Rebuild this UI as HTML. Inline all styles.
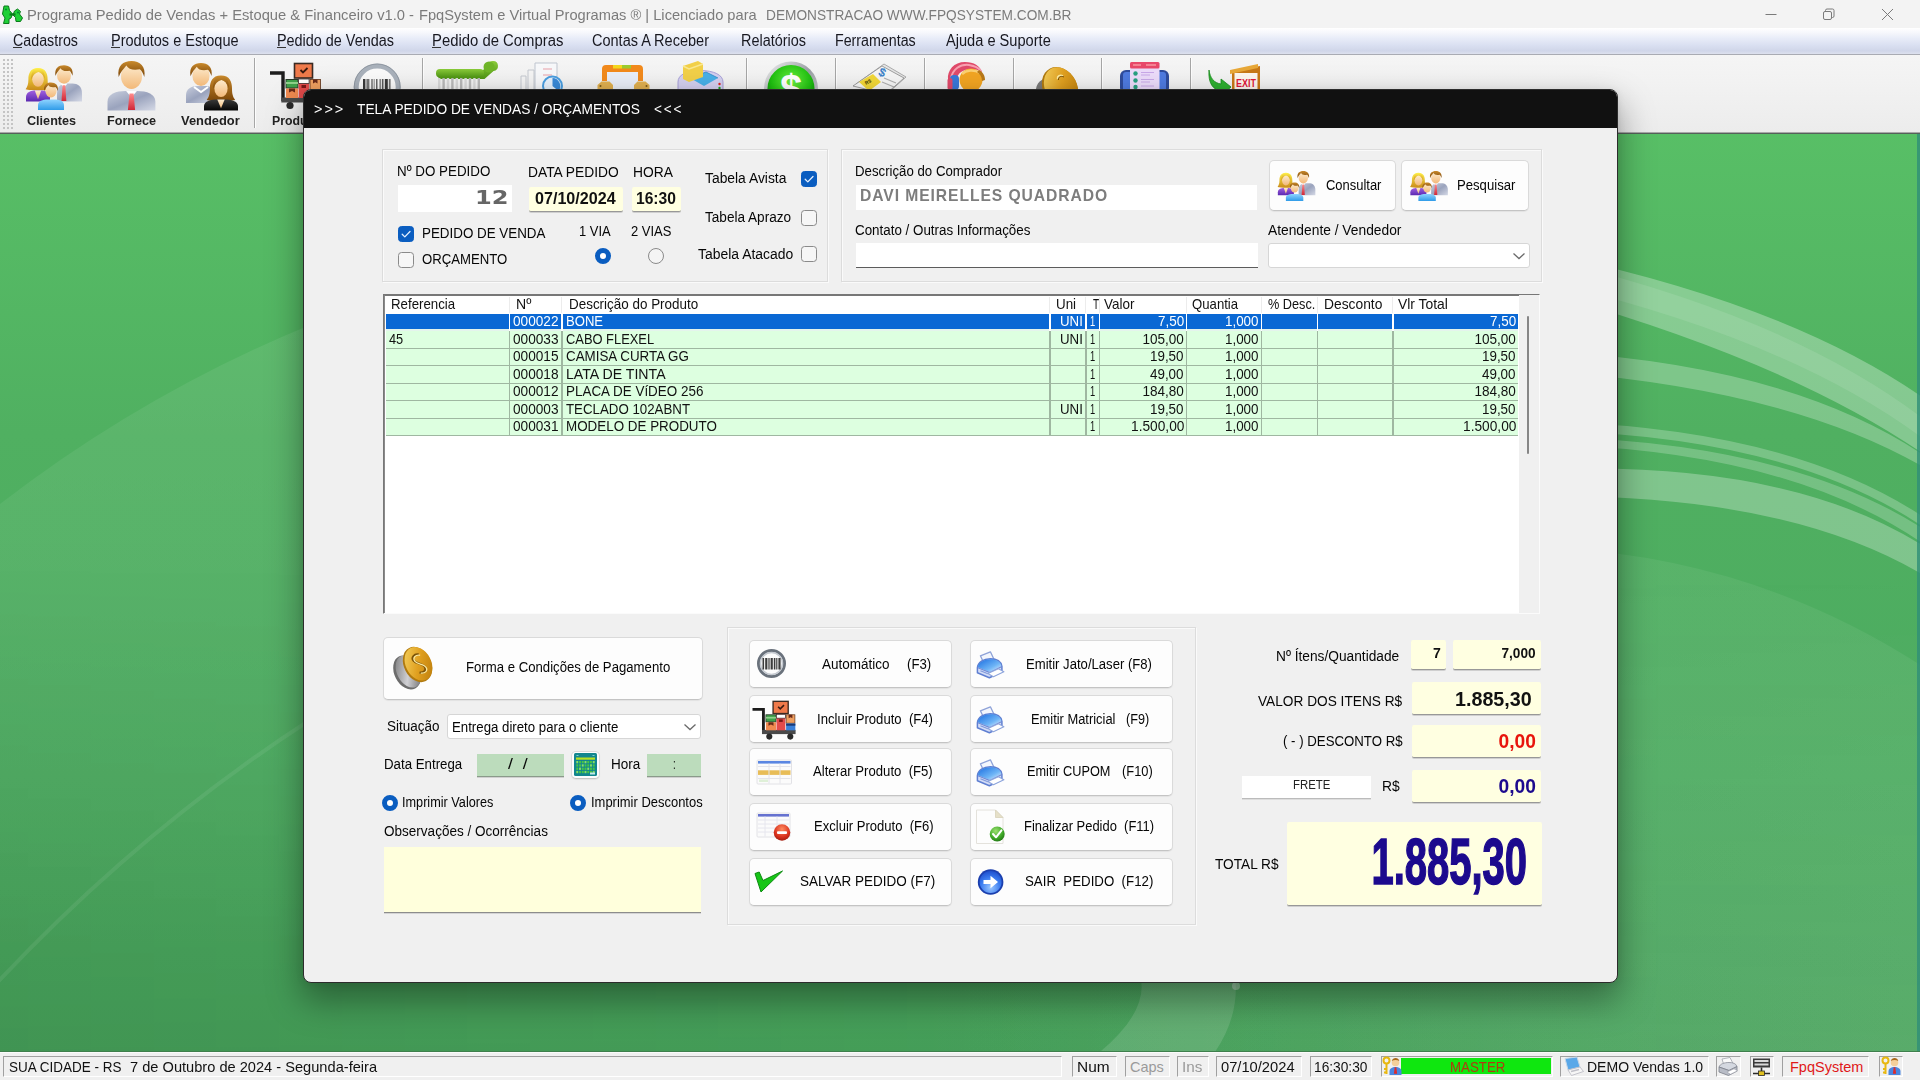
<!DOCTYPE html>
<html lang="pt-BR"><head><meta charset="utf-8"><title>Programa Pedido de Vendas</title>
<style>
html,body{margin:0;padding:0;}
body{width:1920px;height:1080px;overflow:hidden;background:#4fae60;}
#app{position:relative;width:1920px;height:1080px;overflow:hidden;font-family:"Liberation Sans",sans-serif;}
#app div,#app span.t,#app svg{position:absolute;box-sizing:border-box;}
#app span.t{white-space:nowrap;display:block;}
.btn{background:#fdfdfd;border:1px solid #dadada;border-bottom-color:#c4c4c4;border-radius:5px;box-shadow:0 1px 1px rgba(0,0,0,.06);}
.grp{border:1px solid #dcdcdc;box-shadow:inset 1px 1px 0 #fafafa, 1px 1px 0 #fafafa;}
.ylw{background:#ffffe1;border-bottom:1px solid #989898;box-shadow:0 1px 0 #cfcfcf;border-radius:2px;}
.cb{border:1px solid #8a8a8a;border-radius:3.5px;background:#f6f6f6;}
.cb.on{border-color:#0a5dc0;background:#0a5dc0;}
.rd{border:1px solid #8a8a8a;border-radius:50%;background:#f4f4f4;}
.rd.on{border:5px solid #0a5dc0;background:#fff;}
.sp{border:1px solid;border-color:#a0a0a0 #fff #fff #a0a0a0;}

</style></head>
<body>
<div id="app">
<svg width="1920" height="1080" viewBox="0 0 1920 1080" style="left:0;top:0">
<defs>
<linearGradient id="bg" x1="0" y1="0" x2="0" y2="1">
<stop offset="0.12" stop-color="#58bf66"/><stop offset="0.40" stop-color="#50b061"/><stop offset="0.72" stop-color="#4cab60"/><stop offset="0.98" stop-color="#47a35b"/>
</linearGradient>
<linearGradient id="bgx" x1="0" y1="0" x2="1" y2="0"><stop offset="0" stop-color="#000" stop-opacity=".09"/><stop offset=".5" stop-color="#000" stop-opacity=".03"/><stop offset="1" stop-color="#fff" stop-opacity=".04"/></linearGradient>
<linearGradient id="bgm" x1="0" y1="0" x2="0" y2="1"><stop offset="0" stop-color="#fff" stop-opacity="0"/><stop offset="1" stop-color="#fff" stop-opacity="1"/></linearGradient>
<mask id="mk"><rect x="0" y="560" width="1920" height="500" fill="url(#bgm)"/></mask>
</defs>
<rect width="1920" height="1080" fill="url(#bg)"/>
<rect x="0" y="560" width="1920" height="500" fill="url(#bgx)" mask="url(#mk)"/>
<path d="M1560 256Q1793.5 306.5 1925 399L1925 455Q1793.5 364.0 1560 297z" fill="rgba(255,255,255,0.3)"/><path d="M1560 262Q1793.5 319.0 1925 420L1925 440Q1793.5 341.5 1560 285z" fill="rgba(255,255,255,0.1)"/><path d="M1560 352Q1793.5 367.0 1925 456L1925 468Q1793.5 391.0 1560 372z" fill="rgba(255,255,255,0.26)"/><path d="M1560 422Q1793.5 430.0 1925 518L1925 528Q1793.5 438.5 1560 431z" fill="rgba(255,255,255,0.24)"/><path d="M1560 437Q1793.5 444.5 1925 530L1925 545Q1793.5 453.0 1560 445z" fill="rgba(255,255,255,0.22)"/><path d="M1560 469Q1793.5 463.0 1925 547L1925 576Q1793.5 497.0 1560 496z" fill="rgba(255,255,255,0.28)"/><linearGradient id="gFadeR" gradientUnits="userSpaceOnUse" x1="900" y1="0" x2="1650" y2="0"><stop offset="0" stop-color="#fff" stop-opacity="0"/><stop offset="1" stop-color="#fff" stop-opacity=".06"/></linearGradient><path d="M900 548H1560Q1760 560 1925 668V1060H900z" fill="url(#gFadeR)"/><linearGradient id="gFadeL" gradientUnits="userSpaceOnUse" x1="0" y1="330" x2="0" y2="960"><stop offset="0" stop-color="#fff" stop-opacity=".075"/><stop offset=".45" stop-color="#fff" stop-opacity=".05"/><stop offset="1" stop-color="#fff" stop-opacity="0"/></linearGradient><path d="M-5 508Q140 395 310 325V1000H-5z" fill="url(#gFadeL)"/><path d="M-5 985Q140 830 310 720" fill="none" stroke="rgba(255,255,255,.07)" stroke-width="4"/><path d="M1100 1052Q1150 1010 1140 975L1235 975Q1240 1015 1215 1052z" fill="rgba(255,255,255,.13)"/><circle cx="1236" cy="986" r="4" fill="rgba(255,255,255,.35)"/><rect x="1917" y="133" width="3" height="920" fill="#2f8f78" opacity=".8"/>
</svg>
<div style="left:0px;top:0px;width:1920px;height:28px;background:#f3f3f3;"></div>
<span id="t1" class="t" style="top:4.8px;font:400 15px/20px 'Liberation Sans', sans-serif;color:#7b7b7b;left:27px;transform-origin:0 50%;transform:scaleX(0.9822);">Programa Pedido de Vendas + Estoque &amp; Financeiro v1.0 -</span>
<span id="t2" class="t" style="top:4.8px;font:400 15px/20px 'Liberation Sans', sans-serif;color:#7b7b7b;left:419px;transform-origin:0 50%;transform:scaleX(0.9769);">FpqSystem e Virtual Programas ® | Licenciado para</span>
<span id="t3" class="t" style="top:4.8px;font:400 15px/20px 'Liberation Sans', sans-serif;color:#7b7b7b;left:766px;transform-origin:0 50%;transform:scaleX(0.9119);">DEMONSTRACAO WWW.FPQSYSTEM.COM.BR</span>
<svg width="160" height="30" viewBox="0 0 160 30" style="left:1760px;top:0" fill="none" stroke="#7a7a7a" stroke-width="1">
<path d="M5.5 14.5h11"/><rect x="63.500" y="11.500" width="8" height="8" rx="1.500"/><path d="M65.500 11.500v-1a1.500 1.500 0 0 1 1.500-1.500h5.500a1.500 1.500 0 0 1 1.500 1.500v5.500a1.500 1.500 0 0 1-1.500 1.500h-1"/><path d="M122 9l11 11M133 9l-11 11"/></svg>
<svg width="24" height="24" viewBox="0 0 24 24" style="left:0;top:3px"><path d="M4 3h4.500l1 4.500 3 3.500-1.500 4-2 1v4.500H3.500l1.500-5.500-2.500-4z" fill="#1fd036" stroke="#0c7a1c" stroke-width="1"/><path d="M14.500 8l3-2 3 2.500-1 2.500 3 4-2 3.500h-4.500l-.5-4-2.500-2.500z" fill="#1fd036" stroke="#0c7a1c" stroke-width="1"/><path d="M9.500 11.500h6" stroke="#0c7a1c" stroke-width="2.200"/><circle cx="6" cy="6.500" r="1" fill="#083"/><circle cx="18" cy="9.500" r="1" fill="#083"/></svg>
<div style="left:0px;top:28px;width:1920px;height:26px;background:linear-gradient(#ffffff 0%,#f6f7fc 18%,#e8ecf8 40%,#d9dff1 68%,#d0d6e9 88%,#dde1ee 100%);"></div>
<div style="left:0px;top:54px;width:1920px;height:1px;background:#a9abb3;"></div>
<span id="t4" class="t" style="top:29.5px;font:400 16px/21px 'Liberation Sans', sans-serif;color:#181820;left:13px;transform-origin:0 50%;transform:scaleX(0.8904);">Cadastros</span>
<span id="t5" class="t" style="top:29.5px;font:400 16px/21px 'Liberation Sans', sans-serif;color:#181820;left:111px;transform-origin:0 50%;transform:scaleX(0.9078);">Produtos e Estoque</span>
<span id="t6" class="t" style="top:29.5px;font:400 16px/21px 'Liberation Sans', sans-serif;color:#181820;left:277px;transform-origin:0 50%;transform:scaleX(0.9000);">Pedido de Vendas</span>
<span id="t7" class="t" style="top:29.5px;font:400 16px/21px 'Liberation Sans', sans-serif;color:#181820;left:432px;transform-origin:0 50%;transform:scaleX(0.9291);">Pedido de Compras</span>
<span id="t8" class="t" style="top:29.5px;font:400 16px/21px 'Liberation Sans', sans-serif;color:#181820;left:592px;transform-origin:0 50%;transform:scaleX(0.9070);">Contas A Receber</span>
<span id="t9" class="t" style="top:29.5px;font:400 16px/21px 'Liberation Sans', sans-serif;color:#181820;left:741px;transform-origin:0 50%;transform:scaleX(0.9028);">Relatórios</span>
<span id="t10" class="t" style="top:29.5px;font:400 16px/21px 'Liberation Sans', sans-serif;color:#181820;left:835px;transform-origin:0 50%;transform:scaleX(0.8901);">Ferramentas</span>
<span id="t11" class="t" style="top:29.5px;font:400 16px/21px 'Liberation Sans', sans-serif;color:#181820;left:946px;transform-origin:0 50%;transform:scaleX(0.9130);">Ajuda e Suporte</span>
<div style="left:13px;top:47px;width:9px;height:1px;background:#333;"></div>
<div style="left:111px;top:47px;width:9px;height:1px;background:#333;"></div>
<div style="left:277px;top:47px;width:9px;height:1px;background:#333;"></div>
<div style="left:432px;top:47px;width:9px;height:1px;background:#333;"></div>
<div style="left:0px;top:55px;width:1920px;height:78px;background:linear-gradient(#f5f5f5,#ececec);"></div>
<div style="left:0px;top:132px;width:1920px;height:1px;background:#a8a8a8;"></div>
<div style="left:0px;top:133px;width:1920px;height:1px;background:#55615a;"></div>
<div style="left:254px;top:58px;width:2px;height:70px;border-left:1px solid #a6a6a6;border-right:1px solid #fdfdfd;"></div>
<div style="left:422px;top:58px;width:2px;height:70px;border-left:1px solid #a6a6a6;border-right:1px solid #fdfdfd;"></div>
<div style="left:746px;top:58px;width:2px;height:70px;border-left:1px solid #a6a6a6;border-right:1px solid #fdfdfd;"></div>
<div style="left:835px;top:58px;width:2px;height:70px;border-left:1px solid #a6a6a6;border-right:1px solid #fdfdfd;"></div>
<div style="left:924px;top:58px;width:2px;height:70px;border-left:1px solid #a6a6a6;border-right:1px solid #fdfdfd;"></div>
<div style="left:1013px;top:58px;width:2px;height:70px;border-left:1px solid #a6a6a6;border-right:1px solid #fdfdfd;"></div>
<div style="left:1101px;top:58px;width:2px;height:70px;border-left:1px solid #a6a6a6;border-right:1px solid #fdfdfd;"></div>
<div style="left:1190px;top:58px;width:2px;height:70px;border-left:1px solid #a6a6a6;border-right:1px solid #fdfdfd;"></div>
<svg width="12" height="74" style="left:1px;top:57px"><rect x="2" y="2" width="2" height="2" fill="#c4c4c4"/><rect x="6" y="2" width="2" height="2" fill="#c4c4c4"/><rect x="10" y="2" width="2" height="2" fill="#c4c4c4"/><rect x="2" y="6" width="2" height="2" fill="#c4c4c4"/><rect x="6" y="6" width="2" height="2" fill="#c4c4c4"/><rect x="10" y="6" width="2" height="2" fill="#c4c4c4"/><rect x="2" y="10" width="2" height="2" fill="#c4c4c4"/><rect x="6" y="10" width="2" height="2" fill="#c4c4c4"/><rect x="10" y="10" width="2" height="2" fill="#c4c4c4"/><rect x="2" y="14" width="2" height="2" fill="#c4c4c4"/><rect x="6" y="14" width="2" height="2" fill="#c4c4c4"/><rect x="10" y="14" width="2" height="2" fill="#c4c4c4"/><rect x="2" y="18" width="2" height="2" fill="#c4c4c4"/><rect x="6" y="18" width="2" height="2" fill="#c4c4c4"/><rect x="10" y="18" width="2" height="2" fill="#c4c4c4"/><rect x="2" y="22" width="2" height="2" fill="#c4c4c4"/><rect x="6" y="22" width="2" height="2" fill="#c4c4c4"/><rect x="10" y="22" width="2" height="2" fill="#c4c4c4"/><rect x="2" y="26" width="2" height="2" fill="#c4c4c4"/><rect x="6" y="26" width="2" height="2" fill="#c4c4c4"/><rect x="10" y="26" width="2" height="2" fill="#c4c4c4"/><rect x="2" y="30" width="2" height="2" fill="#c4c4c4"/><rect x="6" y="30" width="2" height="2" fill="#c4c4c4"/><rect x="10" y="30" width="2" height="2" fill="#c4c4c4"/><rect x="2" y="34" width="2" height="2" fill="#c4c4c4"/><rect x="6" y="34" width="2" height="2" fill="#c4c4c4"/><rect x="10" y="34" width="2" height="2" fill="#c4c4c4"/><rect x="2" y="38" width="2" height="2" fill="#c4c4c4"/><rect x="6" y="38" width="2" height="2" fill="#c4c4c4"/><rect x="10" y="38" width="2" height="2" fill="#c4c4c4"/><rect x="2" y="42" width="2" height="2" fill="#c4c4c4"/><rect x="6" y="42" width="2" height="2" fill="#c4c4c4"/><rect x="10" y="42" width="2" height="2" fill="#c4c4c4"/><rect x="2" y="46" width="2" height="2" fill="#c4c4c4"/><rect x="6" y="46" width="2" height="2" fill="#c4c4c4"/><rect x="10" y="46" width="2" height="2" fill="#c4c4c4"/><rect x="2" y="50" width="2" height="2" fill="#c4c4c4"/><rect x="6" y="50" width="2" height="2" fill="#c4c4c4"/><rect x="10" y="50" width="2" height="2" fill="#c4c4c4"/><rect x="2" y="54" width="2" height="2" fill="#c4c4c4"/><rect x="6" y="54" width="2" height="2" fill="#c4c4c4"/><rect x="10" y="54" width="2" height="2" fill="#c4c4c4"/><rect x="2" y="58" width="2" height="2" fill="#c4c4c4"/><rect x="6" y="58" width="2" height="2" fill="#c4c4c4"/><rect x="10" y="58" width="2" height="2" fill="#c4c4c4"/><rect x="2" y="62" width="2" height="2" fill="#c4c4c4"/><rect x="6" y="62" width="2" height="2" fill="#c4c4c4"/><rect x="10" y="62" width="2" height="2" fill="#c4c4c4"/><rect x="2" y="66" width="2" height="2" fill="#c4c4c4"/><rect x="6" y="66" width="2" height="2" fill="#c4c4c4"/><rect x="10" y="66" width="2" height="2" fill="#c4c4c4"/><rect x="2" y="70" width="2" height="2" fill="#c4c4c4"/><rect x="6" y="70" width="2" height="2" fill="#c4c4c4"/><rect x="10" y="70" width="2" height="2" fill="#c4c4c4"/></svg>
<span id="t12" class="t" style="top:111.5px;font:700 13px/17px 'Liberation Sans', sans-serif;color:#222;left:27px;transform-origin:0 50%;transform:scaleX(0.9706);">Clientes</span>
<span id="t13" class="t" style="top:111.5px;font:700 13px/17px 'Liberation Sans', sans-serif;color:#222;left:106.5px;transform-origin:0 50%;transform:scaleX(0.9706);">Fornece</span>
<span id="t14" class="t" style="top:111.5px;font:700 13px/17px 'Liberation Sans', sans-serif;color:#222;left:180.5px;transform-origin:0 50%;transform:scaleX(0.9915);">Vendedor</span>
<span id="t15" class="t" style="top:111.5px;font:700 13px/17px 'Liberation Sans', sans-serif;color:#222;left:271.5px;transform-origin:0 50%;transform:scaleX(0.9474);">Produ</span>
<svg width="1920" height="80" viewBox="0 54 1920 80" style="left:0;top:54px"><defs>
<linearGradient id="gSkin" x1="0" y1="0" x2="0" y2="1"><stop offset="0" stop-color="#fdeccf"/><stop offset="1" stop-color="#f2b878"/></linearGradient>
<linearGradient id="gHair" x1="0" y1="0" x2="0" y2="1"><stop offset="0" stop-color="#c98a2c"/><stop offset="1" stop-color="#7a4508"/></linearGradient>
<linearGradient id="gBlond" x1="0" y1="0" x2="0" y2="1"><stop offset="0" stop-color="#fff04a"/><stop offset="1" stop-color="#c98a1a"/></linearGradient>
<linearGradient id="gSuit" x1="0" y1="0" x2="1" y2="1"><stop offset="0" stop-color="#c9cfde"/><stop offset=".5" stop-color="#9aa3bd"/><stop offset="1" stop-color="#d5d9e6"/></linearGradient>
<linearGradient id="gPurple" x1="0" y1="0" x2="0" y2="1"><stop offset="0" stop-color="#a060e0"/><stop offset="1" stop-color="#5a28b0"/></linearGradient>
<linearGradient id="gBlue" x1="0" y1="0" x2="0" y2="1"><stop offset="0" stop-color="#8fd4ff"/><stop offset="1" stop-color="#2f9be8"/></linearGradient>
<linearGradient id="gBlack" x1="0" y1="0" x2="0" y2="1"><stop offset="0" stop-color="#3a3a3a"/><stop offset="1" stop-color="#050505"/></linearGradient>
<linearGradient id="gTie" x1="0" y1="0" x2="0" y2="1"><stop offset="0" stop-color="#ff8a8a"/><stop offset="1" stop-color="#d02838"/></linearGradient>
<radialGradient id="gGreenBall" cx=".5" cy=".35" r=".7"><stop offset="0" stop-color="#6cf040"/><stop offset=".6" stop-color="#1fc010"/><stop offset="1" stop-color="#0a7a08"/></radialGradient>
<linearGradient id="gSilver" x1="0" y1="0" x2="1" y2="1"><stop offset="0" stop-color="#f4f4f4"/><stop offset=".5" stop-color="#9a9ea4"/><stop offset="1" stop-color="#e4e4e4"/></linearGradient>
<linearGradient id="gGold" x1="0" y1="0" x2="1" y2="1"><stop offset="0" stop-color="#f7d766"/><stop offset=".5" stop-color="#e0a020"/><stop offset="1" stop-color="#b87808"/></linearGradient>
<linearGradient id="gGray" x1="0" y1="0" x2="1" y2="1"><stop offset="0" stop-color="#6e6e6e"/><stop offset=".5" stop-color="#d0d0d4"/><stop offset="1" stop-color="#5a5a5a"/></linearGradient>
<linearGradient id="gBasket" x1="0" y1="0" x2="0" y2="1"><stop offset="0" stop-color="#8acb3a"/><stop offset="1" stop-color="#4f9414"/></linearGradient>
<linearGradient id="gPrnTop" x1="0" y1="0" x2="1" y2="1"><stop offset="0" stop-color="#1c6ee0"/><stop offset=".6" stop-color="#6db4f6"/><stop offset="1" stop-color="#e8f2ff"/></linearGradient>
<radialGradient id="gBlueBall" cx=".5" cy=".75" r=".8"><stop offset="0" stop-color="#9cc8ff"/><stop offset=".55" stop-color="#3b7cf0"/><stop offset="1" stop-color="#1a49c8"/></radialGradient>
<radialGradient id="gRedBall" cx=".5" cy=".3" r=".8"><stop offset="0" stop-color="#ff8a60"/><stop offset=".6" stop-color="#d8301c"/><stop offset="1" stop-color="#8a1408"/></radialGradient>
<radialGradient id="gGrnChk" cx=".4" cy=".3" r=".8"><stop offset="0" stop-color="#9be070"/><stop offset=".6" stop-color="#3ea828"/><stop offset="1" stop-color="#1c6a10"/></radialGradient>
</defs><g transform="translate(22.5 61.5) scale(1.0)"><path d="M34.5 40.0v-8.1c0 -7.2 4.5 -9.9 9.5 -9.9h6.0c5.0 0 9.5 2.7 9.5 9.9v8.1z" fill="url(#gSuit)"/><path d="M37.9 22.0h7.1l-3.6 4.2z" fill="#fff"/><path d="M40.1 23.7h2.7l1.0 15.9h-4.8z" fill="url(#gTie)"/><ellipse cx="41.5" cy="14.0" rx="7.0" ry="8.3" fill="url(#gSkin)"/><path d="M33.0 14.3c-1.3 -7.7 3.0 -10.6 8.5 -10.6s9.8 3.4 8.5 10.6c-0.9 -2.5 -1.7 -4.2 -3.0 -5.1c-4.2 0.9 -7.7 0 -8.9 -2.5c-2.1 2.5 -3.8 4.2 -5.1 7.7z" fill="url(#gHair)"/><path d="M15.5 6.5c7.6 0 9.6 5.6 9.6 11.2c0 4.8 0.8 7.2 2.8 10.0c-4.8 1.6 -20.0 1.6 -24.8 0c2.0 -2.8 2.8 -5.2 2.8 -10.0c0 -5.6 2.0 -11.2 9.6 -11.2z" fill="url(#gBlond)"/><path d="M3.5 40.0v-4.4c0 -5.0 4.8 -6.6 9.6 -6.6h4.8c4.8 0 9.6 1.6 9.6 6.6v4.4z" fill="url(#gPurple)"/><path d="M12.3 29.0h6.4l-3.2 8.8z" fill="url(#gSkin)"/><ellipse cx="15.5" cy="17.7" rx="5.8" ry="7.6" fill="url(#gSkin)"/><path d="M8.7 18.1c0 -8.8 2.4 -11.2 7.2 -11.2c4.0 0 6.4 3.2 6.4 10.4c-1.6 -4.0 -4.0 -6.4 -6.4 -6.8c-3.2 0.8 -5.6 3.2 -7.2 7.6z" fill="url(#gBlond)"/><path d="M15.5 48.5v-4.7c0 -4.2 4.7 -5.8 9.9 -5.8h6.2c5.2 0 9.9 1.6 9.9 5.8v4.7z" fill="url(#gBlue)"/><ellipse cx="28.5" cy="29.3" rx="5.6" ry="6.7" fill="url(#gSkin)"/><path d="M21.7 29.5c-1.0 -6.1 2.4 -8.5 6.8 -8.5s7.8 2.7 6.8 8.5c-0.7 -2.0 -1.4 -3.4 -2.4 -4.1c-3.4 0.7 -6.1 0 -7.1 -2.0c-1.7 2.0 -3.1 3.4 -4.1 6.1z" fill="url(#gHair)"/></g><path d="M107.5 110.5v-8.8c0 -7.8 8.6 -10.7 18.2 -10.7h11.5c9.6 0 18.2 2.9 18.2 10.7v8.8z" fill="url(#gSuit)"/><path d="M126.1 91.0h10.8l-5.4 6.4z" fill="#fff"/><path d="M129.5 93.6h4.1l1.5 16.3h-7.2z" fill="url(#gTie)"/><ellipse cx="131.5" cy="76.5" rx="10.5" ry="12.5" fill="url(#gSkin)"/><path d="M118.7 76.9c-1.9 -11.5 4.5 -16.0 12.8 -16.0s14.7 5.1 12.8 16.0c-1.3 -3.8 -2.6 -6.4 -4.5 -7.7c-6.4 1.3 -11.5 0 -13.4 -3.8c-3.2 3.8 -5.8 6.4 -7.7 11.5z" fill="url(#gHair)"/><path d="M186.0 103.0v-7.7c0 -6.8 5.4 -9.4 11.4 -9.4h7.2c6.0 0 11.4 2.5 11.4 9.4v7.7z" fill="url(#gSuit)"/><ellipse cx="201.0" cy="75.8" rx="8.6" ry="10.3" fill="url(#gSkin)"/><path d="M190.5 76.1c-1.6 -9.5 3.7 -13.1 10.5 -13.1s12.1 4.2 10.5 13.1c-1.1 -3.1 -2.1 -5.2 -3.7 -6.3c-5.2 1.1 -9.5 0 -11.0 -3.1c-2.6 3.1 -4.7 5.2 -6.3 9.5z" fill="url(#gHair)"/><path d="M194 87l7 5 7-5" fill="none" stroke="#fff" stroke-width="2"/><path d="M221.0 75.5c8.7 0 11.0 6.4 11.0 12.9c0 5.5 0.9 8.3 3.2 11.5c-5.5 1.8 -23.0 1.8 -28.5 0c2.3 -3.2 3.2 -6.0 3.2 -11.5c0 -6.4 2.3 -12.9 11.0 -12.9z" fill="url(#gHair)"/><path d="M204.0 110.5v-4.4c0 -5.0 6.8 -6.6 13.6 -6.6h6.8c6.8 0 13.6 1.6 13.6 6.6v4.4z" fill="url(#gBlack)"/><path d="M217.3 99.5h7.4l-3.7 8.8z" fill="url(#gSkin)"/><ellipse cx="221.0" cy="88.4" rx="6.6" ry="8.7" fill="url(#gSkin)"/><path d="M213.2 88.8c0 -10.1 2.8 -12.9 8.3 -12.9c4.6 0 7.4 3.7 7.4 12.0c-1.8 -4.6 -4.6 -7.4 -7.4 -7.8c-3.7 0.9 -6.4 3.7 -8.3 8.7z" fill="url(#gHair)"/><g transform="translate(270 62.5) scale(1.0)"><path d="M0 10.500h13v28" fill="none" stroke="#1d1d1d" stroke-width="3.400" stroke-linejoin="miter"/><rect x="11.300" y="35" width="40" height="5" fill="#4a4a4a"/><circle cx="20" cy="43" r="3.600" fill="#2a2a2a"/><circle cx="45" cy="43" r="3.600" fill="#2a2a2a"/><rect x="24.500" y="1" width="18" height="14.500" fill="#f07a4a" stroke="#3a2a22" stroke-width="1.600"/><path d="M30.500 7.500l2.500 2.500 4.500-4.500" fill="none" stroke="#3a1a10" stroke-width="1.800"/><rect x="16" y="17" width="12" height="8.500" fill="#3fa04a" stroke="#2a3a2a" stroke-width="1"/><rect x="16" y="19.500" width="12" height="2" fill="#8fd08a"/><rect x="16" y="26" width="12" height="9.500" fill="#f08a50"/><path d="M19 26h6v4l-3-1.500-3 1.500z" fill="#6a2a18"/><rect x="28.600" y="16.500" width="10.500" height="19" fill="#e34b4b"/><rect x="28.600" y="16.500" width="10.500" height="4.500" fill="#fff" stroke="#3a2a2a" stroke-width=".8"/><rect x="31.500" y="22.500" width="4.500" height="3" fill="#7a1818"/><rect x="40" y="17" width="10.500" height="10" fill="#f0a060" stroke="#5a3018" stroke-width=".8"/><path d="M43 17h4.500v4l-2.200-1.200-2.300 1.200z" fill="#6a2a18"/><rect x="40" y="27.500" width="11" height="8" fill="#3a80d8"/><rect x="40" y="27.500" width="11" height="2.500" fill="#1a3a78"/></g><circle cx="377.2" cy="87" r="21.0" fill="#fafafa" stroke="#a9b1bb" stroke-width="5"/><circle cx="377.2" cy="87" r="23.0" fill="none" stroke="#7d858f" stroke-width="1" opacity=".6"/><rect x="363.0" y="79" width="2.4" height="14" fill="#3a3a3a"/><rect x="366.4" y="79" width="3.0" height="14" fill="#777"/><rect x="371.4" y="79" width="1.2" height="14" fill="#555"/><rect x="373.6" y="79" width="1.2" height="14" fill="#999"/><rect x="376.2" y="79" width="1.2" height="14" fill="#444"/><rect x="379.4" y="79" width="1.8" height="14" fill="#888"/><rect x="382.2" y="79" width="1.2" height="14" fill="#333"/><rect x="384.8" y="79" width="3.0" height="14" fill="#3a3a3a"/><rect x="388.8" y="79" width="1.8" height="14" fill="#777"/><path d="M438 77h44v-6l6-5.500a5 5 0 1 1 5.500 5.500l-9 8H440z" fill="url(#gBasket)"/><rect x="436" y="69" width="48" height="8.500" rx="4" fill="url(#gBasket)"/><circle cx="489" cy="67" r="5.500" fill="#6fb528"/><rect x="438.0" y="78" width="2.400" height="12" fill="#d9d9d9"/><rect x="442.4" y="78" width="2.400" height="12" fill="#b9b9b9"/><rect x="446.8" y="78" width="2.400" height="12" fill="#d9d9d9"/><rect x="451.2" y="78" width="2.400" height="12" fill="#b9b9b9"/><rect x="455.6" y="78" width="2.400" height="12" fill="#d9d9d9"/><rect x="460.0" y="78" width="2.400" height="12" fill="#b9b9b9"/><rect x="464.4" y="78" width="2.400" height="12" fill="#d9d9d9"/><rect x="468.8" y="78" width="2.400" height="12" fill="#b9b9b9"/><rect x="473.2" y="78" width="2.400" height="12" fill="#d9d9d9"/><rect x="477.6" y="78" width="2.400" height="12" fill="#b9b9b9"/><path d="M521 76h5v14h-5z" fill="#f4f4f4" stroke="#c4c8cf"/><path d="M528 70h6v20h-6z" fill="#f4f4f4" stroke="#c4c8cf"/><path d="M535 63h22v27h-22z" fill="#f7f8fa" stroke="#bfc5cf"/><path d="M543 69h9M543 75h9" stroke="#e8a0a8" stroke-width="1"/><circle cx="552.500" cy="86" r="9.500" fill="#e8f2fc" stroke="#4a9ee0" stroke-width="2"/><path d="M552.500 86v-8a8 8 0 0 1 6 13z" fill="#3a8ad8"/><path d="M602 81V69a4 4 0 0 1 4-4h33a4 4 0 0 1 4 4v12h-5V72h-31v9z" fill="#f28a1c"/><rect x="607" y="72" width="31" height="18" fill="#e9eef8"/><rect x="613" y="65" width="9" height="3.500" fill="#f4d820"/><rect x="622" y="65" width="9" height="3.500" fill="#9ccc30"/><path d="M597.500 90v-5l4-3.500h8l3.500 3.500v5z" fill="#e0b050"/><path d="M634 90v-5l3.500-3.500h8l4 3.500v5z" fill="#e0b050"/><circle cx="600.500" cy="86" r="1" fill="#7a5a18"/><circle cx="646.500" cy="86" r="1" fill="#7a5a18"/><path d="M678 90V82c0-7 8-11.500 22-11.500s23 4.500 23 11.500v8z" fill="#d4d0f0" stroke="#a8a0d8"/><path d="M690 78l16-6 12 6-14 8z" fill="#48b0e8"/><path d="M690 78l16-6 12 6" fill="none" stroke="#2a88c8" stroke-width=".8"/><path d="M683 66l15-5 5 3v13l-14 5-6-3z" fill="#f2d048"/><path d="M683 66l6 3 14-5" fill="none" stroke="#fae890" stroke-width="1.500"/><circle cx="719.500" cy="84" r="1.200" fill="#e02020"/><circle cx="719.500" cy="88" r="1.200" fill="#20a020"/><circle cx="791" cy="88.500" r="27" fill="url(#gSilver)"/><circle cx="791" cy="88.500" r="23.500" fill="url(#gGreenBall)"/><text x="791" y="103" font-family="Liberation Sans, sans-serif" font-weight="700" font-size="40" text-anchor="middle" fill="#fff">$</text><path d="M856 84l28-20 22 13-18 16z" fill="#e6e6e6" stroke="#9a9a9a" stroke-width=".8"/><path d="M853 86l29-20 22 12-18 16z" fill="#f6f6f6" stroke="#8a8a8a" stroke-width=".8"/><path d="M859 82l14-8 8 8-12 9z" fill="#f2d838"/><text x="866" y="85" font-family="Liberation Sans, sans-serif" font-size="5" font-weight="700" fill="#4a4000" transform="rotate(-30 866 85)">R$</text><path d="M884 78l12 5M882 82l12 5" stroke="#b0b0b0" stroke-width="1.200"/><text x="882.500" y="76.500" font-family="Liberation Sans, sans-serif" font-size="12" font-weight="700" text-anchor="middle" fill="#3a80c8" transform="rotate(25 882.500 72)">$</text><path d="M948 80c-1-10 6-18 17-18 9 0 15 4 17 10-5-3-12-4-17-2-6 2-9 7-9 12z" fill="#e04a6a"/><path d="M951 78c2-9 9-14 18-13 6 1 10 3 12 6" fill="none" stroke="#f8a0b0" stroke-width="2"/><circle cx="971" cy="80" r="11.500" fill="#f2a522"/><path d="M962 74c4-4 12-5 18-1" fill="none" stroke="#fbd070" stroke-width="2.500"/><path d="M979 70c4 2 6 6 6 10l-3 1c0-4-2-7-5-9z" fill="#b87818"/><rect x="950" y="75" width="9" height="15" rx="4" fill="#3a78d8"/><rect x="947.500" y="78" width="5" height="12" rx="2.500" fill="#e04a6a"/><ellipse cx="1050" cy="96" rx="13" ry="18" transform="rotate(-27 1050 96)" fill="#7a7a7a"/><ellipse cx="1060" cy="88" rx="17" ry="22" transform="rotate(-27 1060 88)" fill="#b07a10"/><ellipse cx="1061" cy="87.300" rx="16" ry="21" transform="rotate(-27 1061 87.300)" fill="url(#gGold)"/><path d="M1063 76c-3-1.500-6 0-5.500 3" fill="none" stroke="#fbe9a0" stroke-width="1.600"/><path d="M1064 77c-3-1.500-6 0-5.500 3" fill="none" stroke="#7a5208" stroke-width="1"/><rect x="1120" y="70" width="49" height="24" rx="6" fill="#2f4c9c"/><rect x="1123" y="72" width="43" height="22" rx="3" fill="#4f7be0"/><rect x="1130" y="62" width="29.500" height="30" rx="1.500" fill="#ecdcfa"/><rect x="1130" y="62" width="29.500" height="6.500" rx="1.500" fill="#e8486a"/><path d="M1133 65h8M1146 65h10" stroke="#fbb" stroke-width="1.200"/><circle cx="1135.500" cy="73.500" r="2.200" fill="#28a080"/><circle cx="1135.500" cy="80.500" r="2.200" fill="#28a080"/><circle cx="1135.500" cy="87" r="2.200" fill="#28a080"/><path d="M1141 72.500h13M1141 75h9M1141 79.500h13M1141 82h9M1141 86h13" stroke="#c8a8e8" stroke-width="1"/><path d="M1232 72l28-6v28l-28-1z" fill="#c87818"/><path d="M1230 70l28-6v4l-28 6z" fill="#e8a838"/><rect x="1234.500" y="73" width="23" height="18" fill="#fdf6f0"/><text x="1246" y="86.500" font-family="Liberation Sans, sans-serif" font-size="11" font-weight="700" text-anchor="middle" fill="#e01838" textLength="20" lengthAdjust="spacingAndGlyphs">EXIT</text><path d="M1209 70c1 8 5 13 12 14v-5l10 8-10 9v-5c-8-1-13-8-12-21z" fill="#2eb030" stroke="#188a1c" stroke-width=".8"/></svg>
<div style="left:0px;top:1051px;width:1920px;height:1px;background:#3f7f4d;"></div>
<div style="left:0px;top:1052px;width:1920px;height:28px;background:#f0f0f0;border-top:1px solid #fafafa;"></div>
<div class="sp" style="left:3px;top:1056px;width:1059px;height:21px;"></div>
<div class="sp" style="left:1072px;top:1056px;width:45px;height:21px;"></div>
<div class="sp" style="left:1125px;top:1056px;width:45px;height:21px;"></div>
<div class="sp" style="left:1177px;top:1056px;width:32px;height:21px;"></div>
<div class="sp" style="left:1216px;top:1056px;width:86px;height:21px;"></div>
<div class="sp" style="left:1310px;top:1056px;width:62px;height:21px;"></div>
<div class="sp" style="left:1381px;top:1056px;width:172px;height:21px;"></div>
<div class="sp" style="left:1560px;top:1056px;width:149px;height:21px;"></div>
<div class="sp" style="left:1716px;top:1056px;width:25px;height:21px;"></div>
<div class="sp" style="left:1750px;top:1056px;width:24px;height:21px;"></div>
<div class="sp" style="left:1782px;top:1056px;width:87px;height:21px;"></div>
<div class="sp" style="left:1879px;top:1056px;width:24px;height:21px;"></div>
<span id="t16" class="t" style="top:1057.5px;font:400 14.5px/19px 'Liberation Sans', sans-serif;color:#111;left:9px;transform-origin:0 50%;transform:scaleX(0.9298);">SUA CIDADE - RS</span>
<span id="t17" class="t" style="top:1057.5px;font:400 14.5px/19px 'Liberation Sans', sans-serif;color:#111;left:129.5px;transform-origin:0 50%;transform:scaleX(1.0082);">7 de Outubro de 2024 - Segunda-feira</span>
<span id="t18" class="t" style="top:1057.5px;font:400 14.5px/19px 'Liberation Sans', sans-serif;color:#111;left:1077px;transform-origin:0 50%;transform:scaleX(1.0645);">Num</span>
<span id="t19" class="t" style="top:1057.5px;font:400 14.5px/19px 'Liberation Sans', sans-serif;color:#9a9a9a;left:1130px;transform-origin:0 50%;">Caps</span>
<span id="t20" class="t" style="top:1057.5px;font:400 14.5px/19px 'Liberation Sans', sans-serif;color:#9a9a9a;left:1182px;transform-origin:0 50%;transform:scaleX(1.0526);">Ins</span>
<span id="t21" class="t" style="top:1057.5px;font:400 14.5px/19px 'Liberation Sans', sans-serif;color:#111;left:1221px;transform-origin:0 50%;transform:scaleX(1.0137);">07/10/2024</span>
<span id="t22" class="t" style="top:1057.5px;font:400 14.5px/19px 'Liberation Sans', sans-serif;color:#111;left:1314px;transform-origin:0 50%;transform:scaleX(0.9464);">16:30:30</span>
<div style="left:1401px;top:1058px;width:150px;height:16px;background:#0fe70f;"></div>
<span id="t23" class="t" style="top:1057.5px;font:400 14.5px/19px 'Liberation Sans', sans-serif;color:#b03a10;left:1450px;transform-origin:0 50%;transform:scaleX(0.9167);">MASTER</span>
<span id="t24" class="t" style="top:1057.5px;font:400 14.5px/19px 'Liberation Sans', sans-serif;color:#111;left:1587px;transform-origin:0 50%;transform:scaleX(0.9667);">DEMO Vendas 1.0</span>
<span id="t25" class="t" style="top:1057.5px;font:400 14.5px/19px 'Liberation Sans', sans-serif;color:#e01818;left:1790px;transform-origin:0 50%;">FpqSystem</span>
<svg width="540" height="27" viewBox="1380 1053 540 27" style="left:1380px;top:1053px"><circle cx="1386.5" cy="1060.500" r="3" fill="none" stroke="#e8b810" stroke-width="2"/><path d="M1386.5 1063v11M1386.5 1069h-2.500M1386.5 1072.500h-2.500" stroke="#e8b810" stroke-width="2" fill="none"/><circle cx="1395.5" cy="1062.500" r="3.800" fill="#f4cf9a"/><path d="M1391.7 1061c1-4 7-4 7.600 0-2-1.500-5.500-1.500-7.600 0z" fill="#a8681a"/><path d="M1389.5 1075v-3.500c0-3 2.500-4.500 6-4.500s6 1.500 6 4.500v3.500z" fill="#4a86e0"/><path d="M1394.7 1067.200h1.600l.8 6.500h-3.200z" fill="#e02828"/><circle cx="1885.5" cy="1060.500" r="3" fill="none" stroke="#e8b810" stroke-width="2"/><path d="M1885.5 1063v11M1885.5 1069h-2.500M1885.5 1072.500h-2.500" stroke="#e8b810" stroke-width="2" fill="none"/><circle cx="1894.5" cy="1062.500" r="3.800" fill="#f4cf9a"/><path d="M1890.7 1061c1-4 7-4 7.600 0-2-1.500-5.500-1.500-7.600 0z" fill="#a8681a"/><path d="M1888.5 1075v-3.500c0-3 2.500-4.500 6-4.500s6 1.500 6 4.500v3.500z" fill="#4a86e0"/><path d="M1893.7 1067.200h1.600l.8 6.500h-3.200z" fill="#e02828"/><path d="M1565 1058.500l12-1.500 3 10-12 3z" fill="#5aa8e8" stroke="#c8d8e8" stroke-width="1"/><path d="M1568 1070l12-3 3.500 4.500-12 4z" fill="#f6f6f6" stroke="#b8b8c0" stroke-width=".8"/><path d="M1571 1071.500l8-2" stroke="#c0c0c8" stroke-width="1.500"/><path d="M1722 1059l8-1.500 3 6-9 2z" fill="#fafafa" stroke="#a0a4ac" stroke-width=".8"/><path d="M1719 1067c1-3 5-4.500 10-4.500 4 0 7 1 8 4l-8 4z" fill="#d4d8e0" stroke="#8a8e98" stroke-width=".8"/><path d="M1719 1067l10 3.500 8-4v4.500l-8.500 4.500-9.500-3.500z" fill="#b8bcc6" stroke="#7a7e88" stroke-width=".8"/><path d="M1727 1072l7-3.200 3.500 2-7 3.500z" fill="#fff" stroke="#9a9ea8" stroke-width=".6"/><rect x="1753" y="1058.500" width="17" height="9" fill="#3a3a3a"/><rect x="1754.500" y="1060" width="14" height="2" fill="#d8d8d8"/><rect x="1754.500" y="1063.500" width="14" height="2" fill="#d8d8d8"/><path d="M1761.500 1067.500v4M1753 1073.500h17" stroke="#2a2a2a" stroke-width="1.600"/><rect x="1758.500" y="1071" width="6" height="4.500" fill="#e0c020" stroke="#2a2a2a" stroke-width=".8"/></svg>
<div style="left:303px;top:89px;width:1315px;height:894px;border-radius:8px;background:#f0f0f0;border:1px solid #2c2c2c;box-shadow:0 16px 34px 2px rgba(0,0,0,.36), 0 1px 8px rgba(0,0,0,.07);overflow:hidden;"><div style="left:-1px;top:-1px;width:1315px;height:39px;background:#111;"></div></div>
<span id="t26" class="t" style="top:98.5px;font:400 15px/20px 'Liberation Sans', sans-serif;color:#fff;letter-spacing:2px;left:314px;transform-origin:0 50%;transform:scaleX(0.9688);">&gt;&gt;&gt;</span>
<span id="t27" class="t" style="top:98.5px;font:400 15px/20px 'Liberation Sans', sans-serif;color:#fff;left:357px;transform-origin:0 50%;transform:scaleX(0.9159);">TELA PEDIDO DE VENDAS / ORÇAMENTOS</span>
<span id="t28" class="t" style="top:98.5px;font:400 15px/20px 'Liberation Sans', sans-serif;color:#fff;letter-spacing:2px;left:654px;transform-origin:0 50%;transform:scaleX(0.9062);">&lt;&lt;&lt;</span>
<div class="grp" style="left:382px;top:149px;width:446px;height:133px;"></div>
<span id="t29" class="t" style="top:160.9px;font:400 15.4px/20px 'Liberation Sans', sans-serif;color:#060606;left:397px;transform-origin:0 50%;transform:scaleX(0.8692);">Nº DO PEDIDO</span>
<div style="left:398px;top:185px;width:114px;height:27px;background:#fff;"></div>
<span id="t30" class="t" style="top:184.5px;font:700 19px/25px 'DejaVu Sans', 'Liberation Sans', sans-serif;color:#666;right:1412px;transform-origin:100% 50%;transform:scaleX(1.2692);">12</span>
<span id="t31" class="t" style="top:161.9px;font:400 15.4px/20px 'Liberation Sans', sans-serif;color:#060606;left:528px;transform-origin:0 50%;transform:scaleX(0.8960);">DATA PEDIDO</span>
<div class="ylw" style="left:529px;top:187px;width:94px;height:25px;"></div>
<span id="t32" class="t" style="top:187.5px;font:700 17px/22px 'Liberation Sans', sans-serif;color:#111;left:535px;transform-origin:0 50%;transform:scaleX(0.9471);">07/10/2024</span>
<span id="t33" class="t" style="top:161.9px;font:400 15.4px/20px 'Liberation Sans', sans-serif;color:#060606;left:633px;transform-origin:0 50%;transform:scaleX(0.8977);">HORA</span>
<div class="ylw" style="left:632px;top:187px;width:49px;height:25px;"></div>
<span id="t34" class="t" style="top:187.5px;font:700 17px/22px 'Liberation Sans', sans-serif;color:#111;left:636px;transform-origin:0 50%;transform:scaleX(0.9186);">16:30</span>
<span id="t35" class="t" style="top:168.4px;font:400 15.4px/20px 'Liberation Sans', sans-serif;color:#060606;left:705px;transform-origin:0 50%;transform:scaleX(0.9000);">Tabela Avista</span>
<div class="cb on" style="left:800.5px;top:171px;width:16px;height:16px;"><svg width="16" height="16" viewBox="0 0 16 16" style="left:-1px;top:-1px"><path d="M4.200 8.300l2.600 2.600 5.200-5.400" fill="none" stroke="#e4f0ff" stroke-width="1.300" stroke-linecap="round" stroke-linejoin="round"/></svg></div>
<span id="t36" class="t" style="top:207.4px;font:400 15.4px/20px 'Liberation Sans', sans-serif;color:#060606;left:705px;transform-origin:0 50%;transform:scaleX(0.8827);">Tabela Aprazo</span>
<div class="cb" style="left:800.5px;top:210px;width:16px;height:16px;"></div>
<span id="t37" class="t" style="top:243.9px;font:400 15.4px/20px 'Liberation Sans', sans-serif;color:#060606;left:697.5px;transform-origin:0 50%;transform:scaleX(0.9048);">Tabela Atacado</span>
<div class="cb" style="left:800.5px;top:246px;width:16px;height:16px;"></div>
<div class="cb on" style="left:397.5px;top:226px;width:16px;height:16px;"><svg width="16" height="16" viewBox="0 0 16 16" style="left:-1px;top:-1px"><path d="M4.200 8.300l2.600 2.600 5.200-5.400" fill="none" stroke="#e4f0ff" stroke-width="1.300" stroke-linecap="round" stroke-linejoin="round"/></svg></div>
<span id="t38" class="t" style="top:223.4px;font:400 15.4px/20px 'Liberation Sans', sans-serif;color:#060606;left:422px;transform-origin:0 50%;transform:scaleX(0.8697);">PEDIDO DE VENDA</span>
<div class="cb" style="left:397.5px;top:252px;width:16px;height:16px;"></div>
<span id="t39" class="t" style="top:249.4px;font:400 15.4px/20px 'Liberation Sans', sans-serif;color:#060606;left:422px;transform-origin:0 50%;transform:scaleX(0.8550);">ORÇAMENTO</span>
<span id="t40" class="t" style="top:221.4px;font:400 15.4px/20px 'Liberation Sans', sans-serif;color:#060606;left:578.5px;transform-origin:0 50%;transform:scaleX(0.8421);">1 VIA</span>
<span id="t41" class="t" style="top:221.4px;font:400 15.4px/20px 'Liberation Sans', sans-serif;color:#060606;left:631px;transform-origin:0 50%;transform:scaleX(0.8438);">2 VIAS</span>
<div class="rd on" style="left:595px;top:248px;width:16px;height:16px;"></div>
<div class="rd" style="left:648px;top:248px;width:16px;height:16px;"></div>
<div class="grp" style="left:841px;top:149px;width:701px;height:133px;"></div>
<span id="t42" class="t" style="top:160.9px;font:400 15.4px/20px 'Liberation Sans', sans-serif;color:#060606;left:854.5px;transform-origin:0 50%;transform:scaleX(0.8596);">Descrição do Comprador</span>
<div style="left:856px;top:185px;width:401px;height:25px;background:#fff;"></div>
<span id="t43" class="t" style="top:185.0px;font:700 17px/22px 'Liberation Sans', sans-serif;color:#7d7d7d;letter-spacing:1px;left:859.5px;transform-origin:0 50%;transform:scaleX(0.9219);">DAVI MEIRELLES QUADRADO</span>
<div class="btn" style="left:1269px;top:160px;width:127px;height:51px;"></div>
<div class="btn" style="left:1401px;top:160px;width:128px;height:51px;"></div>
<span id="t44" class="t" style="top:174.9px;font:400 15.4px/20px 'Liberation Sans', sans-serif;color:#060606;left:1326px;transform-origin:0 50%;transform:scaleX(0.8409);">Consultar</span>
<span id="t45" class="t" style="top:174.9px;font:400 15.4px/20px 'Liberation Sans', sans-serif;color:#060606;left:1457px;transform-origin:0 50%;transform:scaleX(0.8529);">Pesquisar</span>
<span id="t46" class="t" style="top:219.9px;font:400 15.4px/20px 'Liberation Sans', sans-serif;color:#060606;left:854.5px;transform-origin:0 50%;transform:scaleX(0.8688);">Contato / Outras Informações</span>
<div style="left:856px;top:243px;width:402px;height:25px;background:#fff;border-bottom:1px solid #5c5c5c;"></div>
<span id="t47" class="t" style="top:219.9px;font:400 15.4px/20px 'Liberation Sans', sans-serif;color:#060606;left:1268px;transform-origin:0 50%;transform:scaleX(0.8960);">Atendente / Vendedor</span>
<div style="left:1268px;top:243px;width:262px;height:25px;background:#fff;border:1px solid #d6d6d6;border-radius:3px;"><svg width="14" height="8" viewBox="0 0 14 8" style="right:3px;top:8px"><path d="M1.500 1.500l5.500 5 5.500-5" fill="none" stroke="#6a6a6a" stroke-width="1.300"/></svg></div>
<div style="left:383px;top:294px;width:1157px;height:320px;background:#f0f0f0;border:1px solid;border-color:#777 #fbfbfb #fbfbfb #777;"></div>
<div style="left:384px;top:295px;width:1135px;height:318px;background:#fff;border-top:1px solid #777;border-left:1px solid #8a8a8a;"></div>
<span id="t48" class="t" style="top:293.8px;font:400 15px/20px 'Liberation Sans', sans-serif;color:#111;left:391px;transform-origin:0 50%;transform:scaleX(0.8836);">Referencia</span>
<span id="t49" class="t" style="top:293.8px;font:400 15px/20px 'Liberation Sans', sans-serif;color:#111;left:516px;transform-origin:0 50%;transform:scaleX(0.9375);">Nº</span>
<span id="t50" class="t" style="top:293.8px;font:400 15px/20px 'Liberation Sans', sans-serif;color:#111;left:568.5px;transform-origin:0 50%;transform:scaleX(0.8958);">Descrição do Produto</span>
<span id="t51" class="t" style="top:293.8px;font:400 15px/20px 'Liberation Sans', sans-serif;color:#111;left:1056px;transform-origin:0 50%;transform:scaleX(0.8913);">Uni</span>
<span id="t52" class="t" style="top:293.8px;font:400 15px/20px 'Liberation Sans', sans-serif;color:#111;left:1092.5px;transform-origin:0 50%;transform:scaleX(0.6667);">T</span>
<span id="t53" class="t" style="top:293.8px;font:400 15px/20px 'Liberation Sans', sans-serif;color:#111;left:1104px;transform-origin:0 50%;transform:scaleX(0.8971);">Valor</span>
<span id="t54" class="t" style="top:293.8px;font:400 15px/20px 'Liberation Sans', sans-serif;color:#111;left:1192px;transform-origin:0 50%;transform:scaleX(0.8774);">Quantia</span>
<span id="t55" class="t" style="top:293.8px;font:400 15px/20px 'Liberation Sans', sans-serif;color:#111;left:1267.5px;transform-origin:0 50%;transform:scaleX(0.8482);">% Desc.</span>
<span id="t56" class="t" style="top:293.8px;font:400 15px/20px 'Liberation Sans', sans-serif;color:#111;left:1323.5px;transform-origin:0 50%;transform:scaleX(0.9206);">Desconto</span>
<span id="t57" class="t" style="top:293.8px;font:400 15px/20px 'Liberation Sans', sans-serif;color:#111;left:1397.5px;transform-origin:0 50%;transform:scaleX(0.9259);">Vlr Total</span>
<div style="left:508.5px;top:297px;width:1px;height:16px;background:#ececec;"></div>
<div style="left:561px;top:297px;width:1px;height:16px;background:#ececec;"></div>
<div style="left:1049px;top:297px;width:1px;height:16px;background:#ececec;"></div>
<div style="left:1085px;top:297px;width:1px;height:16px;background:#ececec;"></div>
<div style="left:1098.5px;top:297px;width:1px;height:16px;background:#ececec;"></div>
<div style="left:1185.5px;top:297px;width:1px;height:16px;background:#ececec;"></div>
<div style="left:1260.5px;top:297px;width:1px;height:16px;background:#ececec;"></div>
<div style="left:1316.5px;top:297px;width:1px;height:16px;background:#ececec;"></div>
<div style="left:1392px;top:297px;width:1px;height:16px;background:#ececec;"></div>
<div style="left:385.5px;top:313.5px;width:1132.5px;height:17.5px;background:#0a68d4;border-bottom:2px solid #e4f4ec;"><div style="left:123.0px;top:0;width:1.500px;height:17.500px;background:#fff;"></div><div style="left:175.5px;top:0;width:1.500px;height:17.500px;background:#fff;"></div><div style="left:663.5px;top:0;width:1.500px;height:17.500px;background:#fff;"></div><div style="left:699.5px;top:0;width:1.500px;height:17.500px;background:#fff;"></div><div style="left:713.0px;top:0;width:1.500px;height:17.500px;background:#fff;"></div><div style="left:800.0px;top:0;width:1.500px;height:17.500px;background:#fff;"></div><div style="left:875.0px;top:0;width:1.500px;height:17.500px;background:#fff;"></div><div style="left:931.0px;top:0;width:1.500px;height:17.500px;background:#fff;"></div><div style="left:1006.5px;top:0;width:1.500px;height:17.500px;background:#fff;"></div></div>
<span id="t58" class="t" style="top:311.2px;font:400 15px/20px 'Liberation Sans', sans-serif;color:#fff;left:513px;transform-origin:0 50%;transform:scaleX(0.9100);">000022</span>
<span id="t59" class="t" style="top:311.2px;font:400 15px/20px 'Liberation Sans', sans-serif;color:#fff;left:565.5px;transform-origin:0 50%;transform:scaleX(0.8721);">BONE</span>
<span id="t60" class="t" style="top:311.2px;font:400 15px/20px 'Liberation Sans', sans-serif;color:#fff;left:1059.5px;transform-origin:0 50%;transform:scaleX(0.8846);">UNI</span>
<span id="t61" class="t" style="top:311.2px;font:400 15px/20px 'Liberation Sans', sans-serif;color:#fff;left:1089.5px;transform-origin:0 50%;transform:scaleX(0.6250);">1</span>
<span id="t62" class="t" style="top:311.2px;font:400 15px/20px 'Liberation Sans', sans-serif;color:#fff;right:736px;transform-origin:100% 50%;transform:scaleX(0.8966);">7,50</span>
<span id="t63" class="t" style="top:311.2px;font:400 15px/20px 'Liberation Sans', sans-serif;color:#fff;right:661px;transform-origin:100% 50%;transform:scaleX(0.8947);">1,000</span>
<span id="t64" class="t" style="top:311.2px;font:400 15px/20px 'Liberation Sans', sans-serif;color:#fff;right:404px;transform-origin:100% 50%;transform:scaleX(0.8966);">7,50</span>
<div style="left:385.5px;top:331.0px;width:1132.5px;height:17.5px;background:#ddffe0;border-bottom:1px solid #9fb7a1;"><div style="left:123.0px;top:0;width:1.500px;height:17.500px;background:#9fb7a1;"></div><div style="left:175.5px;top:0;width:1.500px;height:17.500px;background:#9fb7a1;"></div><div style="left:663.5px;top:0;width:1.500px;height:17.500px;background:#9fb7a1;"></div><div style="left:699.5px;top:0;width:1.500px;height:17.500px;background:#9fb7a1;"></div><div style="left:713.0px;top:0;width:1.500px;height:17.500px;background:#9fb7a1;"></div><div style="left:800.0px;top:0;width:1.500px;height:17.500px;background:#9fb7a1;"></div><div style="left:875.0px;top:0;width:1.500px;height:17.500px;background:#9fb7a1;"></div><div style="left:931.0px;top:0;width:1.500px;height:17.500px;background:#9fb7a1;"></div><div style="left:1006.5px;top:0;width:1.500px;height:17.500px;background:#9fb7a1;"></div></div>
<span id="t65" class="t" style="top:328.7px;font:400 15px/20px 'Liberation Sans', sans-serif;color:#111;left:389px;transform-origin:0 50%;transform:scaleX(0.8529);">45</span>
<span id="t66" class="t" style="top:328.7px;font:400 15px/20px 'Liberation Sans', sans-serif;color:#111;left:513px;transform-origin:0 50%;transform:scaleX(0.9100);">000033</span>
<span id="t67" class="t" style="top:328.7px;font:400 15px/20px 'Liberation Sans', sans-serif;color:#111;left:565.5px;transform-origin:0 50%;transform:scaleX(0.8592);">CABO FLEXEL</span>
<span id="t68" class="t" style="top:328.7px;font:400 15px/20px 'Liberation Sans', sans-serif;color:#111;left:1059.5px;transform-origin:0 50%;transform:scaleX(0.8846);">UNI</span>
<span id="t69" class="t" style="top:328.7px;font:400 15px/20px 'Liberation Sans', sans-serif;color:#111;left:1089.5px;transform-origin:0 50%;transform:scaleX(0.6250);">1</span>
<span id="t70" class="t" style="top:328.7px;font:400 15px/20px 'Liberation Sans', sans-serif;color:#111;right:736px;transform-origin:100% 50%;transform:scaleX(0.9022);">105,00</span>
<span id="t71" class="t" style="top:328.7px;font:400 15px/20px 'Liberation Sans', sans-serif;color:#111;right:661px;transform-origin:100% 50%;transform:scaleX(0.8947);">1,000</span>
<span id="t72" class="t" style="top:328.7px;font:400 15px/20px 'Liberation Sans', sans-serif;color:#111;right:404px;transform-origin:100% 50%;transform:scaleX(0.9022);">105,00</span>
<div style="left:385.5px;top:348.5px;width:1132.5px;height:17.5px;background:#ddffe0;border-bottom:1px solid #9fb7a1;"><div style="left:123.0px;top:0;width:1.500px;height:17.500px;background:#9fb7a1;"></div><div style="left:175.5px;top:0;width:1.500px;height:17.500px;background:#9fb7a1;"></div><div style="left:663.5px;top:0;width:1.500px;height:17.500px;background:#9fb7a1;"></div><div style="left:699.5px;top:0;width:1.500px;height:17.500px;background:#9fb7a1;"></div><div style="left:713.0px;top:0;width:1.500px;height:17.500px;background:#9fb7a1;"></div><div style="left:800.0px;top:0;width:1.500px;height:17.500px;background:#9fb7a1;"></div><div style="left:875.0px;top:0;width:1.500px;height:17.500px;background:#9fb7a1;"></div><div style="left:931.0px;top:0;width:1.500px;height:17.500px;background:#9fb7a1;"></div><div style="left:1006.5px;top:0;width:1.500px;height:17.500px;background:#9fb7a1;"></div></div>
<span id="t73" class="t" style="top:346.2px;font:400 15px/20px 'Liberation Sans', sans-serif;color:#111;left:513px;transform-origin:0 50%;transform:scaleX(0.9100);">000015</span>
<span id="t74" class="t" style="top:346.2px;font:400 15px/20px 'Liberation Sans', sans-serif;color:#111;left:565.5px;transform-origin:0 50%;transform:scaleX(0.8913);">CAMISA CURTA GG</span>
<span id="t75" class="t" style="top:346.2px;font:400 15px/20px 'Liberation Sans', sans-serif;color:#111;left:1089.5px;transform-origin:0 50%;transform:scaleX(0.6250);">1</span>
<span id="t76" class="t" style="top:346.2px;font:400 15px/20px 'Liberation Sans', sans-serif;color:#111;right:736px;transform-origin:100% 50%;transform:scaleX(0.8947);">19,50</span>
<span id="t77" class="t" style="top:346.2px;font:400 15px/20px 'Liberation Sans', sans-serif;color:#111;right:661px;transform-origin:100% 50%;transform:scaleX(0.8947);">1,000</span>
<span id="t78" class="t" style="top:346.2px;font:400 15px/20px 'Liberation Sans', sans-serif;color:#111;right:404px;transform-origin:100% 50%;transform:scaleX(0.8947);">19,50</span>
<div style="left:385.5px;top:366.0px;width:1132.5px;height:17.5px;background:#ddffe0;border-bottom:1px solid #9fb7a1;"><div style="left:123.0px;top:0;width:1.500px;height:17.500px;background:#9fb7a1;"></div><div style="left:175.5px;top:0;width:1.500px;height:17.500px;background:#9fb7a1;"></div><div style="left:663.5px;top:0;width:1.500px;height:17.500px;background:#9fb7a1;"></div><div style="left:699.5px;top:0;width:1.500px;height:17.500px;background:#9fb7a1;"></div><div style="left:713.0px;top:0;width:1.500px;height:17.500px;background:#9fb7a1;"></div><div style="left:800.0px;top:0;width:1.500px;height:17.500px;background:#9fb7a1;"></div><div style="left:875.0px;top:0;width:1.500px;height:17.500px;background:#9fb7a1;"></div><div style="left:931.0px;top:0;width:1.500px;height:17.500px;background:#9fb7a1;"></div><div style="left:1006.5px;top:0;width:1.500px;height:17.500px;background:#9fb7a1;"></div></div>
<span id="t79" class="t" style="top:363.7px;font:400 15px/20px 'Liberation Sans', sans-serif;color:#111;left:513px;transform-origin:0 50%;transform:scaleX(0.9100);">000018</span>
<span id="t80" class="t" style="top:363.7px;font:400 15px/20px 'Liberation Sans', sans-serif;color:#111;left:565.5px;transform-origin:0 50%;transform:scaleX(0.9434);">LATA DE TINTA</span>
<span id="t81" class="t" style="top:363.7px;font:400 15px/20px 'Liberation Sans', sans-serif;color:#111;left:1089.5px;transform-origin:0 50%;transform:scaleX(0.6250);">1</span>
<span id="t82" class="t" style="top:363.7px;font:400 15px/20px 'Liberation Sans', sans-serif;color:#111;right:736px;transform-origin:100% 50%;transform:scaleX(0.8947);">49,00</span>
<span id="t83" class="t" style="top:363.7px;font:400 15px/20px 'Liberation Sans', sans-serif;color:#111;right:661px;transform-origin:100% 50%;transform:scaleX(0.8947);">1,000</span>
<span id="t84" class="t" style="top:363.7px;font:400 15px/20px 'Liberation Sans', sans-serif;color:#111;right:404px;transform-origin:100% 50%;transform:scaleX(0.8947);">49,00</span>
<div style="left:385.5px;top:383.5px;width:1132.5px;height:17.5px;background:#ddffe0;border-bottom:1px solid #9fb7a1;"><div style="left:123.0px;top:0;width:1.500px;height:17.500px;background:#9fb7a1;"></div><div style="left:175.5px;top:0;width:1.500px;height:17.500px;background:#9fb7a1;"></div><div style="left:663.5px;top:0;width:1.500px;height:17.500px;background:#9fb7a1;"></div><div style="left:699.5px;top:0;width:1.500px;height:17.500px;background:#9fb7a1;"></div><div style="left:713.0px;top:0;width:1.500px;height:17.500px;background:#9fb7a1;"></div><div style="left:800.0px;top:0;width:1.500px;height:17.500px;background:#9fb7a1;"></div><div style="left:875.0px;top:0;width:1.500px;height:17.500px;background:#9fb7a1;"></div><div style="left:931.0px;top:0;width:1.500px;height:17.500px;background:#9fb7a1;"></div><div style="left:1006.5px;top:0;width:1.500px;height:17.500px;background:#9fb7a1;"></div></div>
<span id="t85" class="t" style="top:381.2px;font:400 15px/20px 'Liberation Sans', sans-serif;color:#111;left:513px;transform-origin:0 50%;transform:scaleX(0.9100);">000012</span>
<span id="t86" class="t" style="top:381.2px;font:400 15px/20px 'Liberation Sans', sans-serif;color:#111;left:565.5px;transform-origin:0 50%;transform:scaleX(0.8954);">PLACA DE VíDEO 256</span>
<span id="t87" class="t" style="top:381.2px;font:400 15px/20px 'Liberation Sans', sans-serif;color:#111;left:1089.5px;transform-origin:0 50%;transform:scaleX(0.6250);">1</span>
<span id="t88" class="t" style="top:381.2px;font:400 15px/20px 'Liberation Sans', sans-serif;color:#111;right:736px;transform-origin:100% 50%;transform:scaleX(0.9022);">184,80</span>
<span id="t89" class="t" style="top:381.2px;font:400 15px/20px 'Liberation Sans', sans-serif;color:#111;right:661px;transform-origin:100% 50%;transform:scaleX(0.8947);">1,000</span>
<span id="t90" class="t" style="top:381.2px;font:400 15px/20px 'Liberation Sans', sans-serif;color:#111;right:404px;transform-origin:100% 50%;transform:scaleX(0.9022);">184,80</span>
<div style="left:385.5px;top:401.0px;width:1132.5px;height:17.5px;background:#ddffe0;border-bottom:1px solid #9fb7a1;"><div style="left:123.0px;top:0;width:1.500px;height:17.500px;background:#9fb7a1;"></div><div style="left:175.5px;top:0;width:1.500px;height:17.500px;background:#9fb7a1;"></div><div style="left:663.5px;top:0;width:1.500px;height:17.500px;background:#9fb7a1;"></div><div style="left:699.5px;top:0;width:1.500px;height:17.500px;background:#9fb7a1;"></div><div style="left:713.0px;top:0;width:1.500px;height:17.500px;background:#9fb7a1;"></div><div style="left:800.0px;top:0;width:1.500px;height:17.500px;background:#9fb7a1;"></div><div style="left:875.0px;top:0;width:1.500px;height:17.500px;background:#9fb7a1;"></div><div style="left:931.0px;top:0;width:1.500px;height:17.500px;background:#9fb7a1;"></div><div style="left:1006.5px;top:0;width:1.500px;height:17.500px;background:#9fb7a1;"></div></div>
<span id="t91" class="t" style="top:398.7px;font:400 15px/20px 'Liberation Sans', sans-serif;color:#111;left:513px;transform-origin:0 50%;transform:scaleX(0.9100);">000003</span>
<span id="t92" class="t" style="top:398.7px;font:400 15px/20px 'Liberation Sans', sans-serif;color:#111;left:565.5px;transform-origin:0 50%;transform:scaleX(0.8857);">TECLADO 102ABNT</span>
<span id="t93" class="t" style="top:398.7px;font:400 15px/20px 'Liberation Sans', sans-serif;color:#111;left:1059.5px;transform-origin:0 50%;transform:scaleX(0.8846);">UNI</span>
<span id="t94" class="t" style="top:398.7px;font:400 15px/20px 'Liberation Sans', sans-serif;color:#111;left:1089.5px;transform-origin:0 50%;transform:scaleX(0.6250);">1</span>
<span id="t95" class="t" style="top:398.7px;font:400 15px/20px 'Liberation Sans', sans-serif;color:#111;right:736px;transform-origin:100% 50%;transform:scaleX(0.8947);">19,50</span>
<span id="t96" class="t" style="top:398.7px;font:400 15px/20px 'Liberation Sans', sans-serif;color:#111;right:661px;transform-origin:100% 50%;transform:scaleX(0.8947);">1,000</span>
<span id="t97" class="t" style="top:398.7px;font:400 15px/20px 'Liberation Sans', sans-serif;color:#111;right:404px;transform-origin:100% 50%;transform:scaleX(0.8947);">19,50</span>
<div style="left:385.5px;top:418.5px;width:1132.5px;height:17.5px;background:#ddffe0;border-bottom:1px solid #9fb7a1;"><div style="left:123.0px;top:0;width:1.500px;height:17.500px;background:#9fb7a1;"></div><div style="left:175.5px;top:0;width:1.500px;height:17.500px;background:#9fb7a1;"></div><div style="left:663.5px;top:0;width:1.500px;height:17.500px;background:#9fb7a1;"></div><div style="left:699.5px;top:0;width:1.500px;height:17.500px;background:#9fb7a1;"></div><div style="left:713.0px;top:0;width:1.500px;height:17.500px;background:#9fb7a1;"></div><div style="left:800.0px;top:0;width:1.500px;height:17.500px;background:#9fb7a1;"></div><div style="left:875.0px;top:0;width:1.500px;height:17.500px;background:#9fb7a1;"></div><div style="left:931.0px;top:0;width:1.500px;height:17.500px;background:#9fb7a1;"></div><div style="left:1006.5px;top:0;width:1.500px;height:17.500px;background:#9fb7a1;"></div></div>
<span id="t98" class="t" style="top:416.2px;font:400 15px/20px 'Liberation Sans', sans-serif;color:#111;left:513px;transform-origin:0 50%;transform:scaleX(0.9100);">000031</span>
<span id="t99" class="t" style="top:416.2px;font:400 15px/20px 'Liberation Sans', sans-serif;color:#111;left:565.5px;transform-origin:0 50%;transform:scaleX(0.8935);">MODELO DE PRODUTO</span>
<span id="t100" class="t" style="top:416.2px;font:400 15px/20px 'Liberation Sans', sans-serif;color:#111;left:1089.5px;transform-origin:0 50%;transform:scaleX(0.6250);">1</span>
<span id="t101" class="t" style="top:416.2px;font:400 15px/20px 'Liberation Sans', sans-serif;color:#111;right:736px;transform-origin:100% 50%;transform:scaleX(0.9138);">1.500,00</span>
<span id="t102" class="t" style="top:416.2px;font:400 15px/20px 'Liberation Sans', sans-serif;color:#111;right:661px;transform-origin:100% 50%;transform:scaleX(0.8947);">1,000</span>
<span id="t103" class="t" style="top:416.2px;font:400 15px/20px 'Liberation Sans', sans-serif;color:#111;right:404px;transform-origin:100% 50%;transform:scaleX(0.9138);">1.500,00</span>
<div style="left:1526.5px;top:316px;width:2.5px;height:138px;background:#868686;border-radius:1px;"></div>
<div class="btn" style="left:383px;top:637px;width:320px;height:63px;"></div>
<span id="t104" class="t" style="top:657.4px;font:400 15.4px/20px 'Liberation Sans', sans-serif;color:#060606;left:465.5px;transform-origin:0 50%;transform:scaleX(0.8556);">Forma e Condições de Pagamento</span>
<span id="t105" class="t" style="top:715.7px;font:400 15.4px/20px 'Liberation Sans', sans-serif;color:#060606;left:387px;transform-origin:0 50%;transform:scaleX(0.8750);">Situação</span>
<div style="left:447px;top:714px;width:254px;height:25px;background:#fff;border:1px solid #d6d6d6;border-radius:3px;"><svg width="14" height="8" viewBox="0 0 14 8" style="right:3px;top:8px"><path d="M1.500 1.500l5.500 5 5.500-5" fill="none" stroke="#6a6a6a" stroke-width="1.300"/></svg></div>
<span id="t106" class="t" style="top:716.7px;font:400 15.4px/20px 'Liberation Sans', sans-serif;color:#060606;left:451.5px;transform-origin:0 50%;transform:scaleX(0.8601);">Entrega direto para o cliente</span>
<span id="t107" class="t" style="top:753.9px;font:400 15.4px/20px 'Liberation Sans', sans-serif;color:#060606;left:383.5px;transform-origin:0 50%;transform:scaleX(0.8626);">Data Entrega</span>
<div style="left:477px;top:754px;width:87px;height:23px;background:#bcdcbc;border-bottom:1px solid #8a9a8a;box-shadow:0 1px 0 #d0d0d0;"></div>
<span id="t108" class="t" style="top:753.9px;font:400 15.4px/20px 'Liberation Sans', sans-serif;color:#060606;left:508px;transform-origin:0 50%;transform:scaleX(1.1471);">/ &nbsp;/</span>
<div class="btn" style="left:571px;top:751px;width:29px;height:28px;"></div>
<span id="t109" class="t" style="top:753.9px;font:400 15.4px/20px 'Liberation Sans', sans-serif;color:#060606;left:610.5px;transform-origin:0 50%;transform:scaleX(0.8788);">Hora</span>
<div style="left:647px;top:754px;width:54px;height:23px;background:#bcdcbc;border-bottom:1px solid #8a9a8a;box-shadow:0 1px 0 #d0d0d0;"></div>
<span id="t110" class="t" style="top:754.4px;font:400 15.4px/20px 'Liberation Sans', sans-serif;color:#060606;left:672.5px;transform-origin:0 50%;transform:scaleX(0.6250);">:</span>
<div class="rd on" style="left:381.5px;top:795px;width:16px;height:16px;"></div>
<span id="t111" class="t" style="top:792.4px;font:400 15.4px/20px 'Liberation Sans', sans-serif;color:#060606;left:401.5px;transform-origin:0 50%;transform:scaleX(0.8243);">Imprimir Valores</span>
<div class="rd on" style="left:570px;top:795px;width:16px;height:16px;"></div>
<span id="t112" class="t" style="top:792.4px;font:400 15.4px/20px 'Liberation Sans', sans-serif;color:#060606;left:590.5px;transform-origin:0 50%;transform:scaleX(0.8421);">Imprimir Descontos</span>
<span id="t113" class="t" style="top:821.4px;font:400 15.4px/20px 'Liberation Sans', sans-serif;color:#060606;left:383.5px;transform-origin:0 50%;transform:scaleX(0.8790);">Observações / Ocorrências</span>
<div style="left:384px;top:847px;width:317px;height:66px;background:#ffffdc;border-bottom:1px solid #8c8c8c;box-shadow:0 1px 0 #d4d4d4;"></div>
<div class="grp" style="left:727px;top:627px;width:469px;height:298px;"></div>
<div class="btn" style="left:749px;top:640px;width:203px;height:48px;"></div>
<div class="btn" style="left:970px;top:640px;width:203px;height:48px;"></div>
<div class="btn" style="left:749px;top:695px;width:203px;height:48px;"></div>
<div class="btn" style="left:970px;top:695px;width:203px;height:48px;"></div>
<div class="btn" style="left:749px;top:748px;width:203px;height:48px;"></div>
<div class="btn" style="left:970px;top:748px;width:203px;height:48px;"></div>
<div class="btn" style="left:749px;top:803px;width:203px;height:48px;"></div>
<div class="btn" style="left:970px;top:803px;width:203px;height:48px;"></div>
<div class="btn" style="left:749px;top:858px;width:203px;height:48px;"></div>
<div class="btn" style="left:970px;top:858px;width:203px;height:48px;"></div>
<span id="t114" class="t" style="top:653.9px;font:400 15.4px/20px 'Liberation Sans', sans-serif;color:#060606;left:821.5px;transform-origin:0 50%;transform:scaleX(0.8766);">Automático</span>
<span id="t115" class="t" style="top:653.9px;font:400 15.4px/20px 'Liberation Sans', sans-serif;color:#060606;left:907px;transform-origin:0 50%;transform:scaleX(0.8571);">(F3)</span>
<span id="t116" class="t" style="top:708.9px;font:400 15.4px/20px 'Liberation Sans', sans-serif;color:#060606;left:817px;transform-origin:0 50%;transform:scaleX(0.8529);">Incluir Produto &nbsp;(F4)</span>
<span id="t117" class="t" style="top:760.9px;font:400 15.4px/20px 'Liberation Sans', sans-serif;color:#060606;left:812.5px;transform-origin:0 50%;transform:scaleX(0.8536);">Alterar Produto &nbsp;(F5)</span>
<span id="t118" class="t" style="top:815.9px;font:400 15.4px/20px 'Liberation Sans', sans-serif;color:#060606;left:813.5px;transform-origin:0 50%;transform:scaleX(0.8475);">Excluir Produto &nbsp;(F6)</span>
<span id="t119" class="t" style="top:871.4px;font:400 15.4px/20px 'Liberation Sans', sans-serif;color:#060606;left:799.5px;transform-origin:0 50%;transform:scaleX(0.8766);">SALVAR PEDIDO (F7)</span>
<span id="t120" class="t" style="top:653.9px;font:400 15.4px/20px 'Liberation Sans', sans-serif;color:#060606;left:1026px;transform-origin:0 50%;transform:scaleX(0.8514);">Emitir Jato/Laser (F8)</span>
<span id="t121" class="t" style="top:708.9px;font:400 15.4px/20px 'Liberation Sans', sans-serif;color:#060606;left:1031px;transform-origin:0 50%;transform:scaleX(0.8366);">Emitir Matricial</span>
<span id="t122" class="t" style="top:708.9px;font:400 15.4px/20px 'Liberation Sans', sans-serif;color:#060606;left:1126px;transform-origin:0 50%;transform:scaleX(0.8214);">(F9)</span>
<span id="t123" class="t" style="top:760.9px;font:400 15.4px/20px 'Liberation Sans', sans-serif;color:#060606;left:1027px;transform-origin:0 50%;transform:scaleX(0.8267);">Emitir CUPOM</span>
<span id="t124" class="t" style="top:760.9px;font:400 15.4px/20px 'Liberation Sans', sans-serif;color:#060606;left:1122px;transform-origin:0 50%;transform:scaleX(0.8378);">(F10)</span>
<span id="t125" class="t" style="top:815.9px;font:400 15.4px/20px 'Liberation Sans', sans-serif;color:#060606;left:1023.5px;transform-origin:0 50%;transform:scaleX(0.8419);">Finalizar Pedido &nbsp;(F11)</span>
<span id="t126" class="t" style="top:871.4px;font:400 15.4px/20px 'Liberation Sans', sans-serif;color:#060606;left:1024.5px;transform-origin:0 50%;transform:scaleX(0.8624);">SAIR &nbsp;PEDIDO &nbsp;(F12)</span>
<span id="t127" class="t" style="top:645.9px;font:400 15.4px/20px 'Liberation Sans', sans-serif;color:#060606;left:1276px;transform-origin:0 50%;transform:scaleX(0.8913);">Nº Ítens/Quantidade</span>
<div class="ylw" style="left:1411px;top:640px;width:35px;height:30px;"></div>
<span id="t128" class="t" style="top:642.5px;font:700 15px/20px 'Liberation Sans', sans-serif;color:#111;left:1432.5px;transform-origin:0 50%;transform:scaleX(0.9375);">7</span>
<div class="ylw" style="left:1453px;top:640px;width:88px;height:30px;"></div>
<span id="t129" class="t" style="top:642.5px;font:700 15px/20px 'Liberation Sans', sans-serif;color:#111;right:384.5px;transform-origin:100% 50%;transform:scaleX(0.9079);">7,000</span>
<span id="t130" class="t" style="top:690.9px;font:400 15.4px/20px 'Liberation Sans', sans-serif;color:#060606;left:1258px;transform-origin:0 50%;transform:scaleX(0.8889);">VALOR DOS ITENS R$</span>
<div class="ylw" style="left:1412px;top:682px;width:129px;height:33px;"></div>
<span id="t131" class="t" style="top:684.5px;font:700 21px/27px 'Liberation Sans', sans-serif;color:#111;right:388px;transform-origin:100% 50%;transform:scaleX(0.9390);">1.885,30</span>
<span id="t132" class="t" style="top:730.9px;font:400 15.4px/20px 'Liberation Sans', sans-serif;color:#060606;left:1282.5px;transform-origin:0 50%;transform:scaleX(0.8597);">( - ) DESCONTO R$</span>
<div class="ylw" style="left:1412px;top:725px;width:129px;height:33px;"></div>
<span id="t133" class="t" style="top:727.0px;font:700 21px/27px 'Liberation Sans', sans-serif;color:#e8140c;right:384px;transform-origin:100% 50%;transform:scaleX(0.9146);">0,00</span>
<div style="left:1242px;top:776px;width:129px;height:23px;background:#fff;border-bottom:1px solid #bbb;box-shadow:0 1px 0 #ddd;"></div>
<span id="t134" class="t" style="top:777.0px;font:400 12px/16px 'Liberation Sans', sans-serif;color:#222;left:1292.5px;transform-origin:0 50%;transform:scaleX(0.9487);">FRETE</span>
<span id="t135" class="t" style="top:775.9px;font:400 15.4px/20px 'Liberation Sans', sans-serif;color:#060606;left:1382px;transform-origin:0 50%;transform:scaleX(0.9000);">R$</span>
<div class="ylw" style="left:1412px;top:770px;width:129px;height:33px;"></div>
<span id="t136" class="t" style="top:772.0px;font:700 21px/27px 'Liberation Sans', sans-serif;color:#1c0a8e;right:384px;transform-origin:100% 50%;transform:scaleX(0.9146);">0,00</span>
<span id="t137" class="t" style="top:853.9px;font:400 15.4px/20px 'Liberation Sans', sans-serif;color:#060606;left:1214.5px;transform-origin:0 50%;transform:scaleX(0.8889);">TOTAL R$</span>
<div class="ylw" style="left:1287px;top:822px;width:255px;height:84px;"></div>
<span id="t138" class="t" style="top:819.5px;font:700 65px/84px 'Liberation Sans', sans-serif;color:#1c0a8e;right:392.5px;transform-origin:100% 50%;transform:scaleX(0.6146);-webkit-text-stroke:1.600px #1c0a8e;">1.885,30</span>
<svg width="1315" height="894" viewBox="303 89 1315 894" style="left:303px;top:89px"><g transform="translate(1275.5 168.5) scale(0.67)"><path d="M34.5 40.0v-8.1c0 -7.2 4.5 -9.9 9.5 -9.9h6.0c5.0 0 9.5 2.7 9.5 9.9v8.1z" fill="url(#gSuit)"/><path d="M37.9 22.0h7.1l-3.6 4.2z" fill="#fff"/><path d="M40.1 23.7h2.7l1.0 15.9h-4.8z" fill="url(#gTie)"/><ellipse cx="41.5" cy="14.0" rx="7.0" ry="8.3" fill="url(#gSkin)"/><path d="M33.0 14.3c-1.3 -7.7 3.0 -10.6 8.5 -10.6s9.8 3.4 8.5 10.6c-0.9 -2.5 -1.7 -4.2 -3.0 -5.1c-4.2 0.9 -7.7 0 -8.9 -2.5c-2.1 2.5 -3.8 4.2 -5.1 7.7z" fill="url(#gHair)"/><path d="M15.5 6.5c7.6 0 9.6 5.6 9.6 11.2c0 4.8 0.8 7.2 2.8 10.0c-4.8 1.6 -20.0 1.6 -24.8 0c2.0 -2.8 2.8 -5.2 2.8 -10.0c0 -5.6 2.0 -11.2 9.6 -11.2z" fill="url(#gBlond)"/><path d="M3.5 40.0v-4.4c0 -5.0 4.8 -6.6 9.6 -6.6h4.8c4.8 0 9.6 1.6 9.6 6.6v4.4z" fill="url(#gPurple)"/><path d="M12.3 29.0h6.4l-3.2 8.8z" fill="url(#gSkin)"/><ellipse cx="15.5" cy="17.7" rx="5.8" ry="7.6" fill="url(#gSkin)"/><path d="M8.7 18.1c0 -8.8 2.4 -11.2 7.2 -11.2c4.0 0 6.4 3.2 6.4 10.4c-1.6 -4.0 -4.0 -6.4 -6.4 -6.8c-3.2 0.8 -5.6 3.2 -7.2 7.6z" fill="url(#gBlond)"/><path d="M15.5 48.5v-4.7c0 -4.2 4.7 -5.8 9.9 -5.8h6.2c5.2 0 9.9 1.6 9.9 5.8v4.7z" fill="url(#gBlue)"/><ellipse cx="28.5" cy="29.3" rx="5.6" ry="6.7" fill="url(#gSkin)"/><path d="M21.7 29.5c-1.0 -6.1 2.4 -8.5 6.8 -8.5s7.8 2.7 6.8 8.5c-0.7 -2.0 -1.4 -3.4 -2.4 -4.1c-3.4 0.7 -6.1 0 -7.1 -2.0c-1.7 2.0 -3.1 3.4 -4.1 6.1z" fill="url(#gHair)"/></g><g transform="translate(1408 168.5) scale(0.67)"><path d="M34.5 40.0v-8.1c0 -7.2 4.5 -9.9 9.5 -9.9h6.0c5.0 0 9.5 2.7 9.5 9.9v8.1z" fill="url(#gSuit)"/><path d="M37.9 22.0h7.1l-3.6 4.2z" fill="#fff"/><path d="M40.1 23.7h2.7l1.0 15.9h-4.8z" fill="url(#gTie)"/><ellipse cx="41.5" cy="14.0" rx="7.0" ry="8.3" fill="url(#gSkin)"/><path d="M33.0 14.3c-1.3 -7.7 3.0 -10.6 8.5 -10.6s9.8 3.4 8.5 10.6c-0.9 -2.5 -1.7 -4.2 -3.0 -5.1c-4.2 0.9 -7.7 0 -8.9 -2.5c-2.1 2.5 -3.8 4.2 -5.1 7.7z" fill="url(#gHair)"/><path d="M15.5 6.5c7.6 0 9.6 5.6 9.6 11.2c0 4.8 0.8 7.2 2.8 10.0c-4.8 1.6 -20.0 1.6 -24.8 0c2.0 -2.8 2.8 -5.2 2.8 -10.0c0 -5.6 2.0 -11.2 9.6 -11.2z" fill="url(#gBlond)"/><path d="M3.5 40.0v-4.4c0 -5.0 4.8 -6.6 9.6 -6.6h4.8c4.8 0 9.6 1.6 9.6 6.6v4.4z" fill="url(#gPurple)"/><path d="M12.3 29.0h6.4l-3.2 8.8z" fill="url(#gSkin)"/><ellipse cx="15.5" cy="17.7" rx="5.8" ry="7.6" fill="url(#gSkin)"/><path d="M8.7 18.1c0 -8.8 2.4 -11.2 7.2 -11.2c4.0 0 6.4 3.2 6.4 10.4c-1.6 -4.0 -4.0 -6.4 -6.4 -6.8c-3.2 0.8 -5.6 3.2 -7.2 7.6z" fill="url(#gBlond)"/><path d="M15.5 48.5v-4.7c0 -4.2 4.7 -5.8 9.9 -5.8h6.2c5.2 0 9.9 1.6 9.9 5.8v4.7z" fill="url(#gBlue)"/><ellipse cx="28.5" cy="29.3" rx="5.6" ry="6.7" fill="url(#gSkin)"/><path d="M21.7 29.5c-1.0 -6.1 2.4 -8.5 6.8 -8.5s7.8 2.7 6.8 8.5c-0.7 -2.0 -1.4 -3.4 -2.4 -4.1c-3.4 0.7 -6.1 0 -7.1 -2.0c-1.7 2.0 -3.1 3.4 -4.1 6.1z" fill="url(#gHair)"/></g><g transform="translate(392 646) scale(1.0)"><ellipse cx="15" cy="26.500" rx="12.500" ry="18" transform="rotate(-27 15 26.500)" fill="#6c6c6c"/><ellipse cx="16.500" cy="25.500" rx="11.500" ry="17" transform="rotate(-27 16.500 25.500)" fill="url(#gGray)"/><ellipse cx="25.500" cy="18.500" rx="13.500" ry="18.500" transform="rotate(-27 25.500 18.500)" fill="#b07a10"/><ellipse cx="26.500" cy="17.800" rx="12.800" ry="17.600" transform="rotate(-27 26.500 17.800)" fill="url(#gGold)"/><path d="M30 9.500c-4-2.500-8.500 0-7 4 1.500 4 8 5.500 8.500 10 .4 3.500-3.500 5-7 3" fill="none" stroke="#7a5208" stroke-width="2.200" transform="rotate(-20 26 18)"/><path d="M31 10.500c-4-2.500-8.500 0-7 4 1.500 4 8 5.500 8.500 10 .4 3.500-3.500 5-7 3" fill="none" stroke="#fbe9a0" stroke-width="1.200" transform="rotate(-20 26 18)"/></g><rect x="574" y="753" width="23" height="23" rx="1.500" fill="#12868e"/><rect x="576" y="757.500" width="19" height="2.200" fill="#b8e020"/><rect x="576.30" y="761.00" width="1.900" height="2.300" fill="#8ae060"/><rect x="576.30" y="764.30" width="1.900" height="2.300" fill="#48c840"/><rect x="576.30" y="767.60" width="1.900" height="2.300" fill="#48c840"/><rect x="576.30" y="770.90" width="1.900" height="2.300" fill="#8ae060"/><rect x="579.05" y="761.00" width="1.900" height="2.300" fill="#48c840"/><rect x="579.05" y="764.30" width="1.900" height="2.300" fill="#48c840"/><rect x="579.05" y="767.60" width="1.900" height="2.300" fill="#8ae060"/><rect x="579.05" y="770.90" width="1.900" height="2.300" fill="#48c840"/><rect x="581.80" y="761.00" width="1.900" height="2.300" fill="#48c840"/><rect x="581.80" y="764.30" width="1.900" height="2.300" fill="#8ae060"/><rect x="581.80" y="767.60" width="1.900" height="2.300" fill="#48c840"/><rect x="581.80" y="770.90" width="1.900" height="2.300" fill="#48c840"/><rect x="584.55" y="761.00" width="1.900" height="2.300" fill="#8ae060"/><rect x="584.55" y="764.30" width="1.900" height="2.300" fill="#48c840"/><rect x="584.55" y="767.60" width="1.900" height="2.300" fill="#48c840"/><rect x="584.55" y="770.90" width="1.900" height="2.300" fill="#8ae060"/><rect x="587.30" y="761.00" width="1.900" height="2.300" fill="#48c840"/><rect x="587.30" y="764.30" width="1.900" height="2.300" fill="#48c840"/><rect x="587.30" y="767.60" width="1.900" height="2.300" fill="#8ae060"/><rect x="587.30" y="770.90" width="1.900" height="2.300" fill="#48c840"/><rect x="590.05" y="761.00" width="1.900" height="2.300" fill="#48c840"/><rect x="590.05" y="764.30" width="1.900" height="2.300" fill="#8ae060"/><rect x="590.05" y="767.60" width="1.900" height="2.300" fill="#48c840"/><rect x="590.05" y="770.90" width="1.900" height="2.300" fill="#48c840"/><rect x="592.80" y="761.00" width="1.900" height="2.300" fill="#8ae060"/><rect x="592.80" y="764.30" width="1.900" height="2.300" fill="#48c840"/><rect x="592.80" y="767.60" width="1.900" height="2.300" fill="#48c840"/><rect x="592.80" y="770.90" width="1.900" height="2.300" fill="#8ae060"/><rect x="590" y="772.500" width="5" height="2" fill="#bfe8e8"/><path d="M576.500 755.500h2M592.500 755.500h2" stroke="#7fd0d0" stroke-width="1"/><circle cx="771.500" cy="663.500" r="13" fill="#fdfdfd" stroke="#6a727c" stroke-width="3"/><circle cx="771.500" cy="663.500" r="11" fill="none" stroke="#c4c9d0" stroke-width="1.600"/><rect x="762.5" y="658" width="1.6" height="11.500" fill="#3c3c3c"/><rect x="765.2" y="658" width="2.2" height="11.500" fill="#3c3c3c"/><rect x="768.4" y="658" width="1.2" height="11.500" fill="#3c3c3c"/><rect x="770.6" y="658" width="2.2" height="11.500" fill="#3c3c3c"/><rect x="773.8" y="658" width="1.6" height="11.500" fill="#3c3c3c"/><rect x="776.2" y="658" width="1.2" height="11.500" fill="#3c3c3c"/><rect x="778.4" y="658" width="2.2" height="11.500" fill="#3c3c3c"/><g transform="translate(752.5 700.5) scale(0.84)"><path d="M0 10.500h13v28" fill="none" stroke="#1d1d1d" stroke-width="3.400" stroke-linejoin="miter"/><rect x="11.300" y="35" width="40" height="5" fill="#4a4a4a"/><circle cx="20" cy="43" r="3.600" fill="#2a2a2a"/><circle cx="45" cy="43" r="3.600" fill="#2a2a2a"/><rect x="24.500" y="1" width="18" height="14.500" fill="#f07a4a" stroke="#3a2a22" stroke-width="1.600"/><path d="M30.500 7.500l2.500 2.500 4.500-4.500" fill="none" stroke="#3a1a10" stroke-width="1.800"/><rect x="16" y="17" width="12" height="8.500" fill="#3fa04a" stroke="#2a3a2a" stroke-width="1"/><rect x="16" y="19.500" width="12" height="2" fill="#8fd08a"/><rect x="16" y="26" width="12" height="9.500" fill="#f08a50"/><path d="M19 26h6v4l-3-1.500-3 1.500z" fill="#6a2a18"/><rect x="28.600" y="16.500" width="10.500" height="19" fill="#e34b4b"/><rect x="28.600" y="16.500" width="10.500" height="4.500" fill="#fff" stroke="#3a2a2a" stroke-width=".8"/><rect x="31.500" y="22.500" width="4.500" height="3" fill="#7a1818"/><rect x="40" y="17" width="10.500" height="10" fill="#f0a060" stroke="#5a3018" stroke-width=".8"/><path d="M43 17h4.500v4l-2.200-1.200-2.300 1.200z" fill="#6a2a18"/><rect x="40" y="27.500" width="11" height="8" fill="#3a80d8"/><rect x="40" y="27.500" width="11" height="2.500" fill="#1a3a78"/></g><rect x="757" y="760" width="34.500" height="24" rx="1" fill="#fbfbfb" stroke="#e2e2e6" stroke-width="1"/><rect x="758" y="761" width="32.500" height="2.600" fill="#5a86e2"/><rect x="758" y="770.300" width="32.500" height="4.600" fill="#e8bd58"/><path d="M758 766.500h32.500M758 778.500h32.500M769 763.600v20M780 763.600v20" stroke="#e4e4ea" stroke-width="1"/><rect x="759" y="779.500" width="9" height="2.500" fill="#dff0d8"/><rect x="757" y="813" width="33" height="24" rx="1" fill="#fbfbfb" stroke="#e2e2e6" stroke-width="1"/><rect x="758" y="814" width="31" height="2.600" fill="#6672d0"/><path d="M758 820h31M758 824h31M758 828h31M758 832h31M765 816.600v20M777 816.600v20" stroke="#e6e6ee" stroke-width="1"/><circle cx="782" cy="832.500" r="8.300" fill="url(#gRedBall)"/><rect x="777" y="831.300" width="10" height="2.600" rx="1" fill="#fff"/><path d="M755 873.500l4.200-1.500 3.800 8.500 19.500-9.500-21.500 21z" fill="#17c617" stroke="#0c8a10" stroke-width="1" stroke-linejoin="round"/><g transform="translate(976.4 650.3) scale(1.0)"><path d="M4 5.500L14 1.500l4.500 9.500L8.500 15z" fill="#f3f6fd" stroke="#8ea2d8" stroke-width="1.300" stroke-linejoin="round"/><path d="M1 17.500c.5-5.500 6-9 13-9 6 0 10.500 2.500 11.500 7.500v5.500L13 27.500 1 22.500z" fill="#d3dcf6" stroke="#5f7fd2" stroke-width="1.500" stroke-linejoin="round"/><path d="M1.500 17c.5-5 6-8 12.500-8 6 0 10 2.300 11 6.800L13.500 21.800z" fill="url(#gPrnTop)"/><path d="M1.500 17.500l12 4.800 11.500-5.800" fill="none" stroke="#6f8bd6" stroke-width="1.100"/><path d="M4 20.500l7.500 3" stroke="#7f98da" stroke-width="1.200"/><path d="M11.500 23.200l10.500-4.700 5.500 3-10.500 5z" fill="#fff" stroke="#8fa6dc" stroke-width="1.100" stroke-linejoin="round"/></g><g transform="translate(976.4 705.3) scale(1.0)"><path d="M4 5.500L14 1.500l4.500 9.500L8.500 15z" fill="#f3f6fd" stroke="#8ea2d8" stroke-width="1.300" stroke-linejoin="round"/><path d="M1 17.500c.5-5.500 6-9 13-9 6 0 10.500 2.500 11.500 7.500v5.500L13 27.500 1 22.500z" fill="#d3dcf6" stroke="#5f7fd2" stroke-width="1.500" stroke-linejoin="round"/><path d="M1.500 17c.5-5 6-8 12.500-8 6 0 10 2.300 11 6.800L13.500 21.800z" fill="url(#gPrnTop)"/><path d="M1.500 17.500l12 4.800 11.500-5.800" fill="none" stroke="#6f8bd6" stroke-width="1.100"/><path d="M4 20.500l7.500 3" stroke="#7f98da" stroke-width="1.200"/><path d="M11.500 23.200l10.500-4.700 5.500 3-10.500 5z" fill="#fff" stroke="#8fa6dc" stroke-width="1.100" stroke-linejoin="round"/></g><g transform="translate(976.4 758.3) scale(1.0)"><path d="M4 5.500L14 1.500l4.500 9.500L8.500 15z" fill="#f3f6fd" stroke="#8ea2d8" stroke-width="1.300" stroke-linejoin="round"/><path d="M1 17.500c.5-5.500 6-9 13-9 6 0 10.500 2.500 11.500 7.500v5.500L13 27.500 1 22.500z" fill="#d3dcf6" stroke="#5f7fd2" stroke-width="1.500" stroke-linejoin="round"/><path d="M1.500 17c.5-5 6-8 12.500-8 6 0 10 2.300 11 6.800L13.500 21.800z" fill="url(#gPrnTop)"/><path d="M1.500 17.500l12 4.800 11.500-5.800" fill="none" stroke="#6f8bd6" stroke-width="1.100"/><path d="M4 20.500l7.500 3" stroke="#7f98da" stroke-width="1.200"/><path d="M11.500 23.200l10.500-4.700 5.500 3-10.500 5z" fill="#fff" stroke="#8fa6dc" stroke-width="1.100" stroke-linejoin="round"/></g><path d="M976.500 810h19l7.500 7.500v26h-26.500z" fill="#fdfdfd" stroke="#e4e2dc" stroke-width="1"/><path d="M995.500 810v7.500h7.500z" fill="#e6e0c8" stroke="#d8d2ba" stroke-width=".8"/><circle cx="997.200" cy="834" r="7.500" fill="url(#gGrnChk)"/><path d="M993 834l3 3.300 5.500-7" fill="none" stroke="#fff" stroke-width="2" stroke-linecap="round" stroke-linejoin="round"/><circle cx="990.600" cy="882" r="12.800" fill="#1b3fae"/><circle cx="990.600" cy="882" r="11" fill="url(#gBlueBall)"/><path d="M983.500 880h7v-4.200l7.500 6.200-7.500 6.200v-4.200h-7z" fill="#fff"/></svg>
</div>
</body></html>
